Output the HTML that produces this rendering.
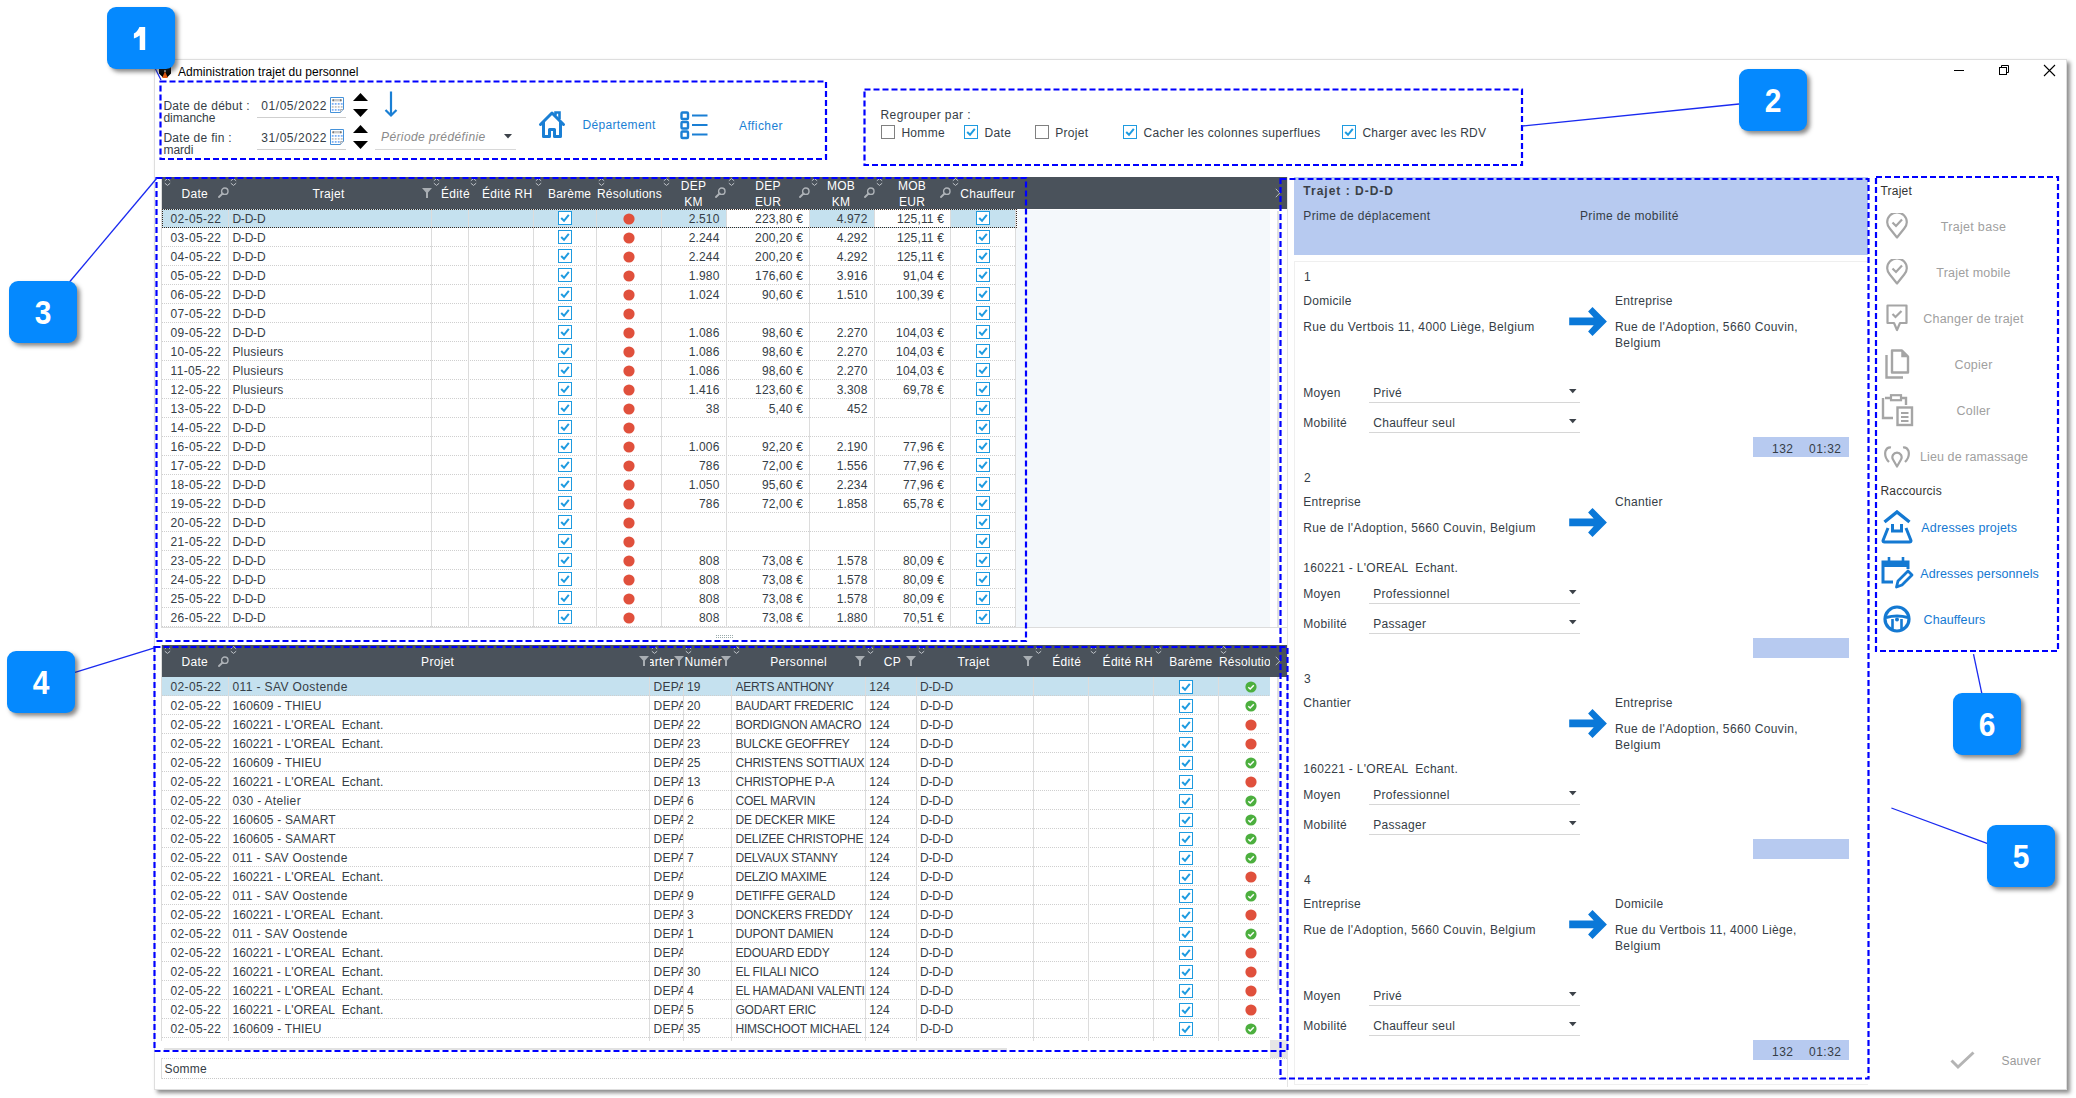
<!DOCTYPE html><html><head><meta charset="utf-8"><style>
html,body{margin:0;padding:0;background:#fff;width:2076px;height:1098px;overflow:hidden;position:relative;font-family:"Liberation Sans", sans-serif;}
.a{position:absolute;}
.t{position:absolute;white-space:pre;font-family:"Liberation Sans", sans-serif;letter-spacing:0.3px;}
.w{color:#fff;}
</style></head><body>
<div class="a" style="left:154px;top:59px;width:1911px;height:1029px;background:#fff;border:1px solid #dedede;box-shadow:3px 3px 4px rgba(0,0,0,0.45);"></div>
<svg class="a" style="left:159px;top:64px;" width="13" height="15" viewBox="0 0 13 15"><path d="M0 3 H3.5 L6 5 L8.5 3 H12 V9.5 L8.5 13 H3.5 L0 9.5 Z" fill="#000"/><path d="M6 7 L8.8 14 H3.2 Z" fill="#e35a12"/><rect x="5.3" y="6" width="1.4" height="2" fill="#ddd"/></svg>
<div class="t " style="left:178.0px;top:66.0px;font-size:12px;line-height:12px;color:#000;letter-spacing:0.05px;">Administration trajet du personnel</div>
<div class="a" style="left:1954px;top:70px;width:10px;height:1px;background:#000;"></div>
<svg class="a" style="left:1998px;top:64px;" width="13" height="13" viewBox="0 0 13 13"><rect x="1.5" y="3.5" width="7" height="7" fill="none" stroke="#000" stroke-width="1"/><path d="M3.5 3.5 V1.5 H10.5 V8.5 H8.5" fill="none" stroke="#000" stroke-width="1"/></svg>
<svg class="a" style="left:2043px;top:64px;" width="13" height="13" viewBox="0 0 13 13"><path d="M1 1 L12 12 M12 1 L1 12" stroke="#000" stroke-width="1.1"/></svg>
<div class="t " style="left:163.4px;top:100.0px;font-size:12px;line-height:12px;color:#353d46;">Date de début :</div>
<div class="t " style="left:163.4px;top:112.0px;font-size:12px;line-height:12px;color:#353d46;letter-spacing:0;">dimanche</div>
<div class="t " style="left:163.4px;top:132.0px;font-size:12px;line-height:12px;color:#353d46;">Date de fin :</div>
<div class="t " style="left:163.4px;top:144.0px;font-size:12px;line-height:12px;color:#353d46;letter-spacing:0;">mardi</div>
<div class="t " style="left:261.3px;top:100.0px;font-size:12px;line-height:12px;color:#353d46;letter-spacing:0.55px;">01/05/2022</div>
<div class="t " style="left:261.3px;top:132.0px;font-size:12px;line-height:12px;color:#353d46;letter-spacing:0.55px;">31/05/2022</div>
<div class="a" style="left:257px;top:117px;width:89px;height:1px;background:#cfcfcf;"></div>
<div class="a" style="left:257px;top:149px;width:89px;height:1px;background:#cfcfcf;"></div>
<svg class="a" style="left:330px;top:97px;" width="15" height="16" viewBox="0 0 15 16"><path d="M0.5 0.5 H13.5 V12.5 L10.5 15.5 H0.5 Z" fill="#fff" stroke="#4592da" stroke-width="1"/><rect x="2" y="2" width="10" height="2.4" fill="#c8c8c8"/><path d="M2 3.2 L4 2 V4.4 Z M12 3.2 L10 2 V4.4 Z" fill="#777"/><rect x="1.8" y="6.0" width="1.8" height="1.8" fill="#7fb0f2"/><rect x="1.8" y="9.0" width="1.8" height="1.8" fill="#c4c4c4"/><rect x="1.8" y="12.0" width="1.8" height="1.8" fill="#7fb0f2"/><rect x="4.8" y="6.0" width="1.8" height="1.8" fill="#7fb0f2"/><rect x="4.8" y="9.0" width="1.8" height="1.8" fill="#c4c4c4"/><rect x="4.8" y="12.0" width="1.8" height="1.8" fill="#7fb0f2"/><rect x="7.8" y="6.0" width="1.8" height="1.8" fill="#7fb0f2"/><rect x="7.8" y="9.0" width="1.8" height="1.8" fill="#c4c4c4"/><rect x="7.8" y="12.0" width="1.8" height="1.8" fill="#7fb0f2"/><rect x="10.8" y="6.0" width="1.8" height="1.8" fill="#7fb0f2"/><rect x="10.8" y="9.0" width="1.8" height="1.8" fill="#c4c4c4"/><rect x="10.8" y="12.0" width="1.8" height="1.8" fill="#7fb0f2"/><path d="M13.5 12.5 L10.5 12.5 L10.5 15.5" fill="#ddd" stroke="#999" stroke-width="0.6"/></svg>
<svg class="a" style="left:330px;top:129px;" width="15" height="16" viewBox="0 0 15 16"><path d="M0.5 0.5 H13.5 V12.5 L10.5 15.5 H0.5 Z" fill="#fff" stroke="#4592da" stroke-width="1"/><rect x="2" y="2" width="10" height="2.4" fill="#c8c8c8"/><path d="M2 3.2 L4 2 V4.4 Z M12 3.2 L10 2 V4.4 Z" fill="#777"/><rect x="1.8" y="6.0" width="1.8" height="1.8" fill="#7fb0f2"/><rect x="1.8" y="9.0" width="1.8" height="1.8" fill="#c4c4c4"/><rect x="1.8" y="12.0" width="1.8" height="1.8" fill="#7fb0f2"/><rect x="4.8" y="6.0" width="1.8" height="1.8" fill="#7fb0f2"/><rect x="4.8" y="9.0" width="1.8" height="1.8" fill="#c4c4c4"/><rect x="4.8" y="12.0" width="1.8" height="1.8" fill="#7fb0f2"/><rect x="7.8" y="6.0" width="1.8" height="1.8" fill="#7fb0f2"/><rect x="7.8" y="9.0" width="1.8" height="1.8" fill="#c4c4c4"/><rect x="7.8" y="12.0" width="1.8" height="1.8" fill="#7fb0f2"/><rect x="10.8" y="6.0" width="1.8" height="1.8" fill="#7fb0f2"/><rect x="10.8" y="9.0" width="1.8" height="1.8" fill="#c4c4c4"/><rect x="10.8" y="12.0" width="1.8" height="1.8" fill="#7fb0f2"/><path d="M13.5 12.5 L10.5 12.5 L10.5 15.5" fill="#ddd" stroke="#999" stroke-width="0.6"/></svg>
<svg class="a" style="left:353px;top:93px;" width="15" height="24" viewBox="0 0 15 24"><path d="M0 8 L7.5 0 L15 8 Z M0 16 L15 16 L7.5 24 Z" fill="#000"/></svg>
<svg class="a" style="left:353px;top:125px;" width="15" height="24" viewBox="0 0 15 24"><path d="M0 8 L7.5 0 L15 8 Z M0 16 L15 16 L7.5 24 Z" fill="#000"/></svg>
<svg class="a" style="left:384px;top:91px;" width="14" height="27" viewBox="0 0 14 27"><path d="M7 0.5 V24.5 M1.5 19 L7 24.5 L12.5 19" fill="none" stroke="#1a7fd4" stroke-width="2.2"/></svg>
<div class="t " style="left:381.0px;top:131.0px;font-size:12px;line-height:12px;color:#8a8a8a;font-style:italic;letter-spacing:0.4px;">Période prédéfinie</div>
<svg class="a" style="left:504px;top:134px;" width="9" height="5" viewBox="0 0 9 5"><path d="M0 0 H8 L4 4.5 Z" fill="#3c4249"/></svg>
<div class="a" style="left:375px;top:149px;width:141px;height:1px;background:#d8d8d8;"></div>
<svg class="a" style="left:538px;top:110px;" width="28" height="29" viewBox="0 0 28 29"><path d="M2.5 14.5 L14 3 L25.5 14.5" fill="none" stroke="#1a7fd4" stroke-width="3" stroke-linejoin="round" stroke-linecap="round"/><path d="M5.5 12 V26.5 H11.5 V19.5 H16.5 V26.5 H22.5 V12" fill="none" stroke="#1a7fd4" stroke-width="3" stroke-linejoin="round"/><path d="M17.5 5.5 V2.5 H21.5 V9" fill="none" stroke="#1a7fd4" stroke-width="2.6"/></svg>
<div class="t " style="left:582.4px;top:119.0px;font-size:12px;line-height:12px;color:#1a7fd4;letter-spacing:0.35px;">Département</div>
<svg class="a" style="left:680px;top:111px;" width="29" height="29" viewBox="0 0 29 29"><rect x="1.5" y="1.5" width="6.5" height="6.5" rx="1" fill="none" stroke="#1a7fd4" stroke-width="2.4"/><rect x="1.5" y="11" width="6.5" height="6.5" rx="1" fill="none" stroke="#1a7fd4" stroke-width="2.4"/><rect x="1.5" y="20.5" width="6.5" height="6.5" rx="1" fill="none" stroke="#1a7fd4" stroke-width="2.4"/><path d="M12 4.5 H27.5 M12 14 H27.5 M12 23.5 H27.5" stroke="#1a7fd4" stroke-width="2.2"/></svg>
<div class="t " style="left:739.0px;top:120.0px;font-size:12px;line-height:12px;color:#1a7fd4;letter-spacing:0.45px;">Afficher</div>
<div class="t " style="left:880.5px;top:109.0px;font-size:12px;line-height:12px;color:#353d46;letter-spacing:0.43px;">Regrouper par :</div>
<svg class="a" style="left:881px;top:125px;" width="14" height="14" viewBox="0 0 14 14"><rect x="0.5" y="0.5" width="13" height="13" fill="#fff" stroke="#808080" stroke-width="1"/></svg>
<div class="t " style="left:901.4px;top:127.0px;font-size:12px;line-height:12px;color:#353d46;">Homme</div>
<svg class="a" style="left:964px;top:125px;" width="14" height="14" viewBox="0 0 14 14"><rect x="0.5" y="0.5" width="13" height="13" fill="#fff" stroke="#1e9be0" stroke-width="1"/><path d="M3.2 7 L6 9.8 L10.8 3.8" fill="none" stroke="#1e9be0" stroke-width="2"/></svg>
<div class="t " style="left:984.6px;top:127.0px;font-size:12px;line-height:12px;color:#353d46;">Date</div>
<svg class="a" style="left:1035px;top:125px;" width="14" height="14" viewBox="0 0 14 14"><rect x="0.5" y="0.5" width="13" height="13" fill="#fff" stroke="#808080" stroke-width="1"/></svg>
<div class="t " style="left:1055.2px;top:127.0px;font-size:12px;line-height:12px;color:#353d46;">Projet</div>
<svg class="a" style="left:1123px;top:125px;" width="14" height="14" viewBox="0 0 14 14"><rect x="0.5" y="0.5" width="13" height="13" fill="#fff" stroke="#1e9be0" stroke-width="1"/><path d="M3.2 7 L6 9.8 L10.8 3.8" fill="none" stroke="#1e9be0" stroke-width="2"/></svg>
<div class="t " style="left:1143.5px;top:127.0px;font-size:12px;line-height:12px;color:#353d46;letter-spacing:0.32px;">Cacher les colonnes superflues</div>
<svg class="a" style="left:1342px;top:125px;" width="14" height="14" viewBox="0 0 14 14"><rect x="0.5" y="0.5" width="13" height="13" fill="#fff" stroke="#1e9be0" stroke-width="1"/><path d="M3.2 7 L6 9.8 L10.8 3.8" fill="none" stroke="#1e9be0" stroke-width="2"/></svg>
<div class="t " style="left:1362.4px;top:127.0px;font-size:12px;line-height:12px;color:#353d46;letter-spacing:0.22px;">Charger avec les RDV</div>
<div class="a" style="left:161px;top:177px;width:1px;height:451px;background:#dcdcdc;"></div>
<div class="a" style="left:1287px;top:177px;width:1px;height:451px;background:#dcdcdc;"></div>
<div class="a" style="left:161px;top:627px;width:1127px;height:1px;background:#dcdcdc;"></div>
<div class="a" style="left:1016px;top:210px;width:254px;height:417px;background:#f4f8fb;"></div>
<div class="a" style="left:1277px;top:211px;width:2px;height:416px;background:#e2e2e2;"></div>
<div class="a" style="left:162px;top:209px;width:853.6px;height:19px;background:#c5e1ef;"></div>
<div class="a" style="left:727px;top:209px;width:82.70000000000005px;height:18px;background:#fff;"></div>
<div class="a" style="left:875px;top:209px;width:75.29999999999995px;height:18px;background:#fff;"></div>
<div class="a" style="left:162px;top:227px;width:853.6px;height:1px;background-image:linear-gradient(90deg,#cfcfcf 50%,transparent 50%);background-size:2px 1px;"></div>
<div class="a" style="left:162px;top:246px;width:853.6px;height:1px;background-image:linear-gradient(90deg,#cfcfcf 50%,transparent 50%);background-size:2px 1px;"></div>
<div class="a" style="left:162px;top:265px;width:853.6px;height:1px;background-image:linear-gradient(90deg,#cfcfcf 50%,transparent 50%);background-size:2px 1px;"></div>
<div class="a" style="left:162px;top:284px;width:853.6px;height:1px;background-image:linear-gradient(90deg,#cfcfcf 50%,transparent 50%);background-size:2px 1px;"></div>
<div class="a" style="left:162px;top:303px;width:853.6px;height:1px;background-image:linear-gradient(90deg,#cfcfcf 50%,transparent 50%);background-size:2px 1px;"></div>
<div class="a" style="left:162px;top:322px;width:853.6px;height:1px;background-image:linear-gradient(90deg,#cfcfcf 50%,transparent 50%);background-size:2px 1px;"></div>
<div class="a" style="left:162px;top:341px;width:853.6px;height:1px;background-image:linear-gradient(90deg,#cfcfcf 50%,transparent 50%);background-size:2px 1px;"></div>
<div class="a" style="left:162px;top:360px;width:853.6px;height:1px;background-image:linear-gradient(90deg,#cfcfcf 50%,transparent 50%);background-size:2px 1px;"></div>
<div class="a" style="left:162px;top:379px;width:853.6px;height:1px;background-image:linear-gradient(90deg,#cfcfcf 50%,transparent 50%);background-size:2px 1px;"></div>
<div class="a" style="left:162px;top:398px;width:853.6px;height:1px;background-image:linear-gradient(90deg,#cfcfcf 50%,transparent 50%);background-size:2px 1px;"></div>
<div class="a" style="left:162px;top:417px;width:853.6px;height:1px;background-image:linear-gradient(90deg,#cfcfcf 50%,transparent 50%);background-size:2px 1px;"></div>
<div class="a" style="left:162px;top:436px;width:853.6px;height:1px;background-image:linear-gradient(90deg,#cfcfcf 50%,transparent 50%);background-size:2px 1px;"></div>
<div class="a" style="left:162px;top:455px;width:853.6px;height:1px;background-image:linear-gradient(90deg,#cfcfcf 50%,transparent 50%);background-size:2px 1px;"></div>
<div class="a" style="left:162px;top:474px;width:853.6px;height:1px;background-image:linear-gradient(90deg,#cfcfcf 50%,transparent 50%);background-size:2px 1px;"></div>
<div class="a" style="left:162px;top:493px;width:853.6px;height:1px;background-image:linear-gradient(90deg,#cfcfcf 50%,transparent 50%);background-size:2px 1px;"></div>
<div class="a" style="left:162px;top:512px;width:853.6px;height:1px;background-image:linear-gradient(90deg,#cfcfcf 50%,transparent 50%);background-size:2px 1px;"></div>
<div class="a" style="left:162px;top:531px;width:853.6px;height:1px;background-image:linear-gradient(90deg,#cfcfcf 50%,transparent 50%);background-size:2px 1px;"></div>
<div class="a" style="left:162px;top:550px;width:853.6px;height:1px;background-image:linear-gradient(90deg,#cfcfcf 50%,transparent 50%);background-size:2px 1px;"></div>
<div class="a" style="left:162px;top:569px;width:853.6px;height:1px;background-image:linear-gradient(90deg,#cfcfcf 50%,transparent 50%);background-size:2px 1px;"></div>
<div class="a" style="left:162px;top:588px;width:853.6px;height:1px;background-image:linear-gradient(90deg,#cfcfcf 50%,transparent 50%);background-size:2px 1px;"></div>
<div class="a" style="left:162px;top:607px;width:853.6px;height:1px;background-image:linear-gradient(90deg,#cfcfcf 50%,transparent 50%);background-size:2px 1px;"></div>
<div class="a" style="left:162px;top:626px;width:853.6px;height:1px;background-image:linear-gradient(90deg,#cfcfcf 50%,transparent 50%);background-size:2px 1px;"></div>
<div class="a" style="left:228px;top:209px;width:1px;height:418px;background:#dcdcdc;"></div>
<div class="a" style="left:431px;top:209px;width:1px;height:418px;background:#dcdcdc;"></div>
<div class="a" style="left:468px;top:209px;width:1px;height:418px;background:#dcdcdc;"></div>
<div class="a" style="left:533px;top:209px;width:1px;height:418px;background:#dcdcdc;"></div>
<div class="a" style="left:596px;top:209px;width:1px;height:418px;background:#dcdcdc;"></div>
<div class="a" style="left:661px;top:209px;width:1px;height:418px;background:#dcdcdc;"></div>
<div class="a" style="left:726px;top:209px;width:1px;height:418px;background:#dcdcdc;"></div>
<div class="a" style="left:809px;top:209px;width:1px;height:418px;background:#dcdcdc;"></div>
<div class="a" style="left:874px;top:209px;width:1px;height:418px;background:#dcdcdc;"></div>
<div class="a" style="left:950px;top:209px;width:1px;height:418px;background:#dcdcdc;"></div>
<div class="a" style="left:1015px;top:209px;width:1px;height:418px;background:#dcdcdc;"></div>
<div class="a" style="left:162px;top:209px;width:852.6px;height:17px;border:1px dotted #3a2a20;box-sizing:content-box;"></div>
<div class="a" style="left:162px;top:177px;width:1125px;height:32px;background:#4a525b;"></div>
<svg class="a" style="left:163.5px;top:178px;" width="7" height="8" viewBox="0 0 7 8"><path d="M0.8 2.8 L3.5 0.6 L6.2 2.8 M0.8 5.2 L3.5 7.4 L6.2 5.2" fill="none" stroke="#c9cdd2" stroke-width="0.9"/></svg>
<svg class="a" style="left:230.0px;top:178px;" width="7" height="8" viewBox="0 0 7 8"><path d="M0.8 2.8 L3.5 0.6 L6.2 2.8 M0.8 5.2 L3.5 7.4 L6.2 5.2" fill="none" stroke="#c9cdd2" stroke-width="0.9"/></svg>
<svg class="a" style="left:432.9px;top:178px;" width="7" height="8" viewBox="0 0 7 8"><path d="M0.8 2.8 L3.5 0.6 L6.2 2.8 M0.8 5.2 L3.5 7.4 L6.2 5.2" fill="none" stroke="#c9cdd2" stroke-width="0.9"/></svg>
<svg class="a" style="left:470.1px;top:178px;" width="7" height="8" viewBox="0 0 7 8"><path d="M0.8 2.8 L3.5 0.6 L6.2 2.8 M0.8 5.2 L3.5 7.4 L6.2 5.2" fill="none" stroke="#c9cdd2" stroke-width="0.9"/></svg>
<svg class="a" style="left:535.1px;top:178px;" width="7" height="8" viewBox="0 0 7 8"><path d="M0.8 2.8 L3.5 0.6 L6.2 2.8 M0.8 5.2 L3.5 7.4 L6.2 5.2" fill="none" stroke="#c9cdd2" stroke-width="0.9"/></svg>
<svg class="a" style="left:597.8px;top:178px;" width="7" height="8" viewBox="0 0 7 8"><path d="M0.8 2.8 L3.5 0.6 L6.2 2.8 M0.8 5.2 L3.5 7.4 L6.2 5.2" fill="none" stroke="#c9cdd2" stroke-width="0.9"/></svg>
<svg class="a" style="left:662.8px;top:178px;" width="7" height="8" viewBox="0 0 7 8"><path d="M0.8 2.8 L3.5 0.6 L6.2 2.8 M0.8 5.2 L3.5 7.4 L6.2 5.2" fill="none" stroke="#c9cdd2" stroke-width="0.9"/></svg>
<svg class="a" style="left:727.9px;top:178px;" width="7" height="8" viewBox="0 0 7 8"><path d="M0.8 2.8 L3.5 0.6 L6.2 2.8 M0.8 5.2 L3.5 7.4 L6.2 5.2" fill="none" stroke="#c9cdd2" stroke-width="0.9"/></svg>
<svg class="a" style="left:811.2px;top:178px;" width="7" height="8" viewBox="0 0 7 8"><path d="M0.8 2.8 L3.5 0.6 L6.2 2.8 M0.8 5.2 L3.5 7.4 L6.2 5.2" fill="none" stroke="#c9cdd2" stroke-width="0.9"/></svg>
<svg class="a" style="left:875.8px;top:178px;" width="7" height="8" viewBox="0 0 7 8"><path d="M0.8 2.8 L3.5 0.6 L6.2 2.8 M0.8 5.2 L3.5 7.4 L6.2 5.2" fill="none" stroke="#c9cdd2" stroke-width="0.9"/></svg>
<svg class="a" style="left:951.8px;top:178px;" width="7" height="8" viewBox="0 0 7 8"><path d="M0.8 2.8 L3.5 0.6 L6.2 2.8 M0.8 5.2 L3.5 7.4 L6.2 5.2" fill="none" stroke="#c9cdd2" stroke-width="0.9"/></svg>
<div class="t " style="left:181.5px;top:188.0px;font-size:12px;line-height:12px;color:#fff;">Date</div>
<svg class="a" style="left:218px;top:187px;" width="11" height="11" viewBox="0 0 11 11"><circle cx="6.8" cy="4.2" r="3.2" fill="none" stroke="#aeb3b8" stroke-width="1.4"/><path d="M4.6 6.5 L1 10" stroke="#aeb3b8" stroke-width="1.8" stroke-linecap="round"/></svg>
<div class="t " style="left:312.5px;top:188.0px;font-size:12px;line-height:12px;color:#fff;">Trajet</div>
<svg class="a" style="left:422px;top:188px;" width="10" height="10" viewBox="0 0 10 10"><path d="M0 0 H10 L6 4.5 V10 H4 V4.5 Z" fill="#a9aeb3"/></svg>
<div class="t " style="left:441.0px;top:188.0px;font-size:12px;line-height:12px;color:#fff;">Édité</div>
<div class="t " style="left:482.0px;top:188.0px;font-size:12px;line-height:12px;color:#fff;">Édité RH</div>
<div class="t " style="left:548.0px;top:188.0px;font-size:12px;line-height:12px;color:#fff;letter-spacing:0.2px;">Barème</div>
<div class="t " style="left:597.0px;top:188.0px;font-size:12px;line-height:12px;color:#fff;letter-spacing:0.2px;">Résolutions</div>
<div class="t " style="left:493.5px;width:400px;text-align:center;top:180.0px;font-size:12px;line-height:12px;color:#fff;">DEP</div>
<div class="t " style="left:493.5px;width:400px;text-align:center;top:196.0px;font-size:12px;line-height:12px;color:#fff;">KM</div>
<svg class="a" style="left:715.4px;top:187px;" width="11" height="11" viewBox="0 0 11 11"><circle cx="6.8" cy="4.2" r="3.2" fill="none" stroke="#aeb3b8" stroke-width="1.4"/><path d="M4.6 6.5 L1 10" stroke="#aeb3b8" stroke-width="1.8" stroke-linecap="round"/></svg>
<div class="t " style="left:568.0px;width:400px;text-align:center;top:180.0px;font-size:12px;line-height:12px;color:#fff;">DEP</div>
<div class="t " style="left:568.0px;width:400px;text-align:center;top:196.0px;font-size:12px;line-height:12px;color:#fff;">EUR</div>
<svg class="a" style="left:798.7px;top:187px;" width="11" height="11" viewBox="0 0 11 11"><circle cx="6.8" cy="4.2" r="3.2" fill="none" stroke="#aeb3b8" stroke-width="1.4"/><path d="M4.6 6.5 L1 10" stroke="#aeb3b8" stroke-width="1.8" stroke-linecap="round"/></svg>
<div class="t " style="left:641.0px;width:400px;text-align:center;top:180.0px;font-size:12px;line-height:12px;color:#fff;">MOB</div>
<div class="t " style="left:641.0px;width:400px;text-align:center;top:196.0px;font-size:12px;line-height:12px;color:#fff;">KM</div>
<svg class="a" style="left:863.7px;top:187px;" width="11" height="11" viewBox="0 0 11 11"><circle cx="6.8" cy="4.2" r="3.2" fill="none" stroke="#aeb3b8" stroke-width="1.4"/><path d="M4.6 6.5 L1 10" stroke="#aeb3b8" stroke-width="1.8" stroke-linecap="round"/></svg>
<div class="t " style="left:712.0px;width:400px;text-align:center;top:180.0px;font-size:12px;line-height:12px;color:#fff;">MOB</div>
<div class="t " style="left:712.0px;width:400px;text-align:center;top:196.0px;font-size:12px;line-height:12px;color:#fff;">EUR</div>
<svg class="a" style="left:939.6px;top:187px;" width="11" height="11" viewBox="0 0 11 11"><circle cx="6.8" cy="4.2" r="3.2" fill="none" stroke="#aeb3b8" stroke-width="1.4"/><path d="M4.6 6.5 L1 10" stroke="#aeb3b8" stroke-width="1.8" stroke-linecap="round"/></svg>
<div class="t " style="left:960.3px;top:188.0px;font-size:12px;line-height:12px;color:#fff;letter-spacing:0.25px;">Chauffeur</div>
<svg class="a" style="left:1275px;top:188px;" width="6" height="10" viewBox="0 0 6 10"><path d="M0.8 0.8 L4.8 5 L0.8 9.2" fill="none" stroke="#b8bcc0" stroke-width="1"/></svg>
<div class="t " style="left:170.5px;top:213.0px;font-size:12px;line-height:12px;color:#353d46;letter-spacing:0.35px;">02-05-22</div>
<div class="t " style="left:232.4px;top:213.0px;font-size:12px;line-height:12px;color:#353d46;letter-spacing:-0.2px;">D-D-D</div>
<svg class="a" style="left:558px;top:211px;" width="14" height="14" viewBox="0 0 14 14"><rect x="0.5" y="0.5" width="13" height="13" fill="#fff" stroke="#1e9be0" stroke-width="1"/><path d="M3.2 7 L6 9.8 L10.8 3.8" fill="none" stroke="#1e9be0" stroke-width="2"/></svg>
<svg class="a" style="left:622.5px;top:212.5px;" width="12" height="12" viewBox="0 0 12 12"><circle cx="6" cy="6" r="5.6" fill="#e0503c"/></svg>
<div class="t " style="right:1356.5px;top:213.0px;font-size:12px;line-height:12px;color:#353d46;letter-spacing:0.15px;">2.510</div>
<div class="t " style="right:1273.0px;top:213.0px;font-size:12px;line-height:12px;color:#353d46;letter-spacing:0.15px;">223,80 €</div>
<div class="t " style="right:1208.5px;top:213.0px;font-size:12px;line-height:12px;color:#353d46;letter-spacing:0.15px;">4.972</div>
<div class="t " style="right:1132.0px;top:213.0px;font-size:12px;line-height:12px;color:#353d46;letter-spacing:0.15px;">125,11 €</div>
<svg class="a" style="left:976px;top:211px;" width="14" height="14" viewBox="0 0 14 14"><rect x="0.5" y="0.5" width="13" height="13" fill="#fff" stroke="#1e9be0" stroke-width="1"/><path d="M3.2 7 L6 9.8 L10.8 3.8" fill="none" stroke="#1e9be0" stroke-width="2"/></svg>
<div class="t " style="left:170.5px;top:232.0px;font-size:12px;line-height:12px;color:#353d46;letter-spacing:0.35px;">03-05-22</div>
<div class="t " style="left:232.4px;top:232.0px;font-size:12px;line-height:12px;color:#353d46;letter-spacing:-0.2px;">D-D-D</div>
<svg class="a" style="left:558px;top:230px;" width="14" height="14" viewBox="0 0 14 14"><rect x="0.5" y="0.5" width="13" height="13" fill="#fff" stroke="#1e9be0" stroke-width="1"/><path d="M3.2 7 L6 9.8 L10.8 3.8" fill="none" stroke="#1e9be0" stroke-width="2"/></svg>
<svg class="a" style="left:622.5px;top:231.5px;" width="12" height="12" viewBox="0 0 12 12"><circle cx="6" cy="6" r="5.6" fill="#e0503c"/></svg>
<div class="t " style="right:1356.5px;top:232.0px;font-size:12px;line-height:12px;color:#353d46;letter-spacing:0.15px;">2.244</div>
<div class="t " style="right:1273.0px;top:232.0px;font-size:12px;line-height:12px;color:#353d46;letter-spacing:0.15px;">200,20 €</div>
<div class="t " style="right:1208.5px;top:232.0px;font-size:12px;line-height:12px;color:#353d46;letter-spacing:0.15px;">4.292</div>
<div class="t " style="right:1132.0px;top:232.0px;font-size:12px;line-height:12px;color:#353d46;letter-spacing:0.15px;">125,11 €</div>
<svg class="a" style="left:976px;top:230px;" width="14" height="14" viewBox="0 0 14 14"><rect x="0.5" y="0.5" width="13" height="13" fill="#fff" stroke="#1e9be0" stroke-width="1"/><path d="M3.2 7 L6 9.8 L10.8 3.8" fill="none" stroke="#1e9be0" stroke-width="2"/></svg>
<div class="t " style="left:170.5px;top:251.0px;font-size:12px;line-height:12px;color:#353d46;letter-spacing:0.35px;">04-05-22</div>
<div class="t " style="left:232.4px;top:251.0px;font-size:12px;line-height:12px;color:#353d46;letter-spacing:-0.2px;">D-D-D</div>
<svg class="a" style="left:558px;top:249px;" width="14" height="14" viewBox="0 0 14 14"><rect x="0.5" y="0.5" width="13" height="13" fill="#fff" stroke="#1e9be0" stroke-width="1"/><path d="M3.2 7 L6 9.8 L10.8 3.8" fill="none" stroke="#1e9be0" stroke-width="2"/></svg>
<svg class="a" style="left:622.5px;top:250.5px;" width="12" height="12" viewBox="0 0 12 12"><circle cx="6" cy="6" r="5.6" fill="#e0503c"/></svg>
<div class="t " style="right:1356.5px;top:251.0px;font-size:12px;line-height:12px;color:#353d46;letter-spacing:0.15px;">2.244</div>
<div class="t " style="right:1273.0px;top:251.0px;font-size:12px;line-height:12px;color:#353d46;letter-spacing:0.15px;">200,20 €</div>
<div class="t " style="right:1208.5px;top:251.0px;font-size:12px;line-height:12px;color:#353d46;letter-spacing:0.15px;">4.292</div>
<div class="t " style="right:1132.0px;top:251.0px;font-size:12px;line-height:12px;color:#353d46;letter-spacing:0.15px;">125,11 €</div>
<svg class="a" style="left:976px;top:249px;" width="14" height="14" viewBox="0 0 14 14"><rect x="0.5" y="0.5" width="13" height="13" fill="#fff" stroke="#1e9be0" stroke-width="1"/><path d="M3.2 7 L6 9.8 L10.8 3.8" fill="none" stroke="#1e9be0" stroke-width="2"/></svg>
<div class="t " style="left:170.5px;top:270.0px;font-size:12px;line-height:12px;color:#353d46;letter-spacing:0.35px;">05-05-22</div>
<div class="t " style="left:232.4px;top:270.0px;font-size:12px;line-height:12px;color:#353d46;letter-spacing:-0.2px;">D-D-D</div>
<svg class="a" style="left:558px;top:268px;" width="14" height="14" viewBox="0 0 14 14"><rect x="0.5" y="0.5" width="13" height="13" fill="#fff" stroke="#1e9be0" stroke-width="1"/><path d="M3.2 7 L6 9.8 L10.8 3.8" fill="none" stroke="#1e9be0" stroke-width="2"/></svg>
<svg class="a" style="left:622.5px;top:269.5px;" width="12" height="12" viewBox="0 0 12 12"><circle cx="6" cy="6" r="5.6" fill="#e0503c"/></svg>
<div class="t " style="right:1356.5px;top:270.0px;font-size:12px;line-height:12px;color:#353d46;letter-spacing:0.15px;">1.980</div>
<div class="t " style="right:1273.0px;top:270.0px;font-size:12px;line-height:12px;color:#353d46;letter-spacing:0.15px;">176,60 €</div>
<div class="t " style="right:1208.5px;top:270.0px;font-size:12px;line-height:12px;color:#353d46;letter-spacing:0.15px;">3.916</div>
<div class="t " style="right:1132.0px;top:270.0px;font-size:12px;line-height:12px;color:#353d46;letter-spacing:0.15px;">91,04 €</div>
<svg class="a" style="left:976px;top:268px;" width="14" height="14" viewBox="0 0 14 14"><rect x="0.5" y="0.5" width="13" height="13" fill="#fff" stroke="#1e9be0" stroke-width="1"/><path d="M3.2 7 L6 9.8 L10.8 3.8" fill="none" stroke="#1e9be0" stroke-width="2"/></svg>
<div class="t " style="left:170.5px;top:289.0px;font-size:12px;line-height:12px;color:#353d46;letter-spacing:0.35px;">06-05-22</div>
<div class="t " style="left:232.4px;top:289.0px;font-size:12px;line-height:12px;color:#353d46;letter-spacing:-0.2px;">D-D-D</div>
<svg class="a" style="left:558px;top:287px;" width="14" height="14" viewBox="0 0 14 14"><rect x="0.5" y="0.5" width="13" height="13" fill="#fff" stroke="#1e9be0" stroke-width="1"/><path d="M3.2 7 L6 9.8 L10.8 3.8" fill="none" stroke="#1e9be0" stroke-width="2"/></svg>
<svg class="a" style="left:622.5px;top:288.5px;" width="12" height="12" viewBox="0 0 12 12"><circle cx="6" cy="6" r="5.6" fill="#e0503c"/></svg>
<div class="t " style="right:1356.5px;top:289.0px;font-size:12px;line-height:12px;color:#353d46;letter-spacing:0.15px;">1.024</div>
<div class="t " style="right:1273.0px;top:289.0px;font-size:12px;line-height:12px;color:#353d46;letter-spacing:0.15px;">90,60 €</div>
<div class="t " style="right:1208.5px;top:289.0px;font-size:12px;line-height:12px;color:#353d46;letter-spacing:0.15px;">1.510</div>
<div class="t " style="right:1132.0px;top:289.0px;font-size:12px;line-height:12px;color:#353d46;letter-spacing:0.15px;">100,39 €</div>
<svg class="a" style="left:976px;top:287px;" width="14" height="14" viewBox="0 0 14 14"><rect x="0.5" y="0.5" width="13" height="13" fill="#fff" stroke="#1e9be0" stroke-width="1"/><path d="M3.2 7 L6 9.8 L10.8 3.8" fill="none" stroke="#1e9be0" stroke-width="2"/></svg>
<div class="t " style="left:170.5px;top:308.0px;font-size:12px;line-height:12px;color:#353d46;letter-spacing:0.35px;">07-05-22</div>
<div class="t " style="left:232.4px;top:308.0px;font-size:12px;line-height:12px;color:#353d46;letter-spacing:-0.2px;">D-D-D</div>
<svg class="a" style="left:558px;top:306px;" width="14" height="14" viewBox="0 0 14 14"><rect x="0.5" y="0.5" width="13" height="13" fill="#fff" stroke="#1e9be0" stroke-width="1"/><path d="M3.2 7 L6 9.8 L10.8 3.8" fill="none" stroke="#1e9be0" stroke-width="2"/></svg>
<svg class="a" style="left:622.5px;top:307.5px;" width="12" height="12" viewBox="0 0 12 12"><circle cx="6" cy="6" r="5.6" fill="#e0503c"/></svg>
<svg class="a" style="left:976px;top:306px;" width="14" height="14" viewBox="0 0 14 14"><rect x="0.5" y="0.5" width="13" height="13" fill="#fff" stroke="#1e9be0" stroke-width="1"/><path d="M3.2 7 L6 9.8 L10.8 3.8" fill="none" stroke="#1e9be0" stroke-width="2"/></svg>
<div class="t " style="left:170.5px;top:327.0px;font-size:12px;line-height:12px;color:#353d46;letter-spacing:0.35px;">09-05-22</div>
<div class="t " style="left:232.4px;top:327.0px;font-size:12px;line-height:12px;color:#353d46;letter-spacing:-0.2px;">D-D-D</div>
<svg class="a" style="left:558px;top:325px;" width="14" height="14" viewBox="0 0 14 14"><rect x="0.5" y="0.5" width="13" height="13" fill="#fff" stroke="#1e9be0" stroke-width="1"/><path d="M3.2 7 L6 9.8 L10.8 3.8" fill="none" stroke="#1e9be0" stroke-width="2"/></svg>
<svg class="a" style="left:622.5px;top:326.5px;" width="12" height="12" viewBox="0 0 12 12"><circle cx="6" cy="6" r="5.6" fill="#e0503c"/></svg>
<div class="t " style="right:1356.5px;top:327.0px;font-size:12px;line-height:12px;color:#353d46;letter-spacing:0.15px;">1.086</div>
<div class="t " style="right:1273.0px;top:327.0px;font-size:12px;line-height:12px;color:#353d46;letter-spacing:0.15px;">98,60 €</div>
<div class="t " style="right:1208.5px;top:327.0px;font-size:12px;line-height:12px;color:#353d46;letter-spacing:0.15px;">2.270</div>
<div class="t " style="right:1132.0px;top:327.0px;font-size:12px;line-height:12px;color:#353d46;letter-spacing:0.15px;">104,03 €</div>
<svg class="a" style="left:976px;top:325px;" width="14" height="14" viewBox="0 0 14 14"><rect x="0.5" y="0.5" width="13" height="13" fill="#fff" stroke="#1e9be0" stroke-width="1"/><path d="M3.2 7 L6 9.8 L10.8 3.8" fill="none" stroke="#1e9be0" stroke-width="2"/></svg>
<div class="t " style="left:170.5px;top:346.0px;font-size:12px;line-height:12px;color:#353d46;letter-spacing:0.35px;">10-05-22</div>
<div class="t " style="left:232.4px;top:346.0px;font-size:12px;line-height:12px;color:#353d46;letter-spacing:0.2px;">Plusieurs</div>
<svg class="a" style="left:558px;top:344px;" width="14" height="14" viewBox="0 0 14 14"><rect x="0.5" y="0.5" width="13" height="13" fill="#fff" stroke="#1e9be0" stroke-width="1"/><path d="M3.2 7 L6 9.8 L10.8 3.8" fill="none" stroke="#1e9be0" stroke-width="2"/></svg>
<svg class="a" style="left:622.5px;top:345.5px;" width="12" height="12" viewBox="0 0 12 12"><circle cx="6" cy="6" r="5.6" fill="#e0503c"/></svg>
<div class="t " style="right:1356.5px;top:346.0px;font-size:12px;line-height:12px;color:#353d46;letter-spacing:0.15px;">1.086</div>
<div class="t " style="right:1273.0px;top:346.0px;font-size:12px;line-height:12px;color:#353d46;letter-spacing:0.15px;">98,60 €</div>
<div class="t " style="right:1208.5px;top:346.0px;font-size:12px;line-height:12px;color:#353d46;letter-spacing:0.15px;">2.270</div>
<div class="t " style="right:1132.0px;top:346.0px;font-size:12px;line-height:12px;color:#353d46;letter-spacing:0.15px;">104,03 €</div>
<svg class="a" style="left:976px;top:344px;" width="14" height="14" viewBox="0 0 14 14"><rect x="0.5" y="0.5" width="13" height="13" fill="#fff" stroke="#1e9be0" stroke-width="1"/><path d="M3.2 7 L6 9.8 L10.8 3.8" fill="none" stroke="#1e9be0" stroke-width="2"/></svg>
<div class="t " style="left:170.5px;top:365.0px;font-size:12px;line-height:12px;color:#353d46;letter-spacing:0.35px;">11-05-22</div>
<div class="t " style="left:232.4px;top:365.0px;font-size:12px;line-height:12px;color:#353d46;letter-spacing:0.2px;">Plusieurs</div>
<svg class="a" style="left:558px;top:363px;" width="14" height="14" viewBox="0 0 14 14"><rect x="0.5" y="0.5" width="13" height="13" fill="#fff" stroke="#1e9be0" stroke-width="1"/><path d="M3.2 7 L6 9.8 L10.8 3.8" fill="none" stroke="#1e9be0" stroke-width="2"/></svg>
<svg class="a" style="left:622.5px;top:364.5px;" width="12" height="12" viewBox="0 0 12 12"><circle cx="6" cy="6" r="5.6" fill="#e0503c"/></svg>
<div class="t " style="right:1356.5px;top:365.0px;font-size:12px;line-height:12px;color:#353d46;letter-spacing:0.15px;">1.086</div>
<div class="t " style="right:1273.0px;top:365.0px;font-size:12px;line-height:12px;color:#353d46;letter-spacing:0.15px;">98,60 €</div>
<div class="t " style="right:1208.5px;top:365.0px;font-size:12px;line-height:12px;color:#353d46;letter-spacing:0.15px;">2.270</div>
<div class="t " style="right:1132.0px;top:365.0px;font-size:12px;line-height:12px;color:#353d46;letter-spacing:0.15px;">104,03 €</div>
<svg class="a" style="left:976px;top:363px;" width="14" height="14" viewBox="0 0 14 14"><rect x="0.5" y="0.5" width="13" height="13" fill="#fff" stroke="#1e9be0" stroke-width="1"/><path d="M3.2 7 L6 9.8 L10.8 3.8" fill="none" stroke="#1e9be0" stroke-width="2"/></svg>
<div class="t " style="left:170.5px;top:384.0px;font-size:12px;line-height:12px;color:#353d46;letter-spacing:0.35px;">12-05-22</div>
<div class="t " style="left:232.4px;top:384.0px;font-size:12px;line-height:12px;color:#353d46;letter-spacing:0.2px;">Plusieurs</div>
<svg class="a" style="left:558px;top:382px;" width="14" height="14" viewBox="0 0 14 14"><rect x="0.5" y="0.5" width="13" height="13" fill="#fff" stroke="#1e9be0" stroke-width="1"/><path d="M3.2 7 L6 9.8 L10.8 3.8" fill="none" stroke="#1e9be0" stroke-width="2"/></svg>
<svg class="a" style="left:622.5px;top:383.5px;" width="12" height="12" viewBox="0 0 12 12"><circle cx="6" cy="6" r="5.6" fill="#e0503c"/></svg>
<div class="t " style="right:1356.5px;top:384.0px;font-size:12px;line-height:12px;color:#353d46;letter-spacing:0.15px;">1.416</div>
<div class="t " style="right:1273.0px;top:384.0px;font-size:12px;line-height:12px;color:#353d46;letter-spacing:0.15px;">123,60 €</div>
<div class="t " style="right:1208.5px;top:384.0px;font-size:12px;line-height:12px;color:#353d46;letter-spacing:0.15px;">3.308</div>
<div class="t " style="right:1132.0px;top:384.0px;font-size:12px;line-height:12px;color:#353d46;letter-spacing:0.15px;">69,78 €</div>
<svg class="a" style="left:976px;top:382px;" width="14" height="14" viewBox="0 0 14 14"><rect x="0.5" y="0.5" width="13" height="13" fill="#fff" stroke="#1e9be0" stroke-width="1"/><path d="M3.2 7 L6 9.8 L10.8 3.8" fill="none" stroke="#1e9be0" stroke-width="2"/></svg>
<div class="t " style="left:170.5px;top:403.0px;font-size:12px;line-height:12px;color:#353d46;letter-spacing:0.35px;">13-05-22</div>
<div class="t " style="left:232.4px;top:403.0px;font-size:12px;line-height:12px;color:#353d46;letter-spacing:-0.2px;">D-D-D</div>
<svg class="a" style="left:558px;top:401px;" width="14" height="14" viewBox="0 0 14 14"><rect x="0.5" y="0.5" width="13" height="13" fill="#fff" stroke="#1e9be0" stroke-width="1"/><path d="M3.2 7 L6 9.8 L10.8 3.8" fill="none" stroke="#1e9be0" stroke-width="2"/></svg>
<svg class="a" style="left:622.5px;top:402.5px;" width="12" height="12" viewBox="0 0 12 12"><circle cx="6" cy="6" r="5.6" fill="#e0503c"/></svg>
<div class="t " style="right:1356.5px;top:403.0px;font-size:12px;line-height:12px;color:#353d46;letter-spacing:0.15px;">38</div>
<div class="t " style="right:1273.0px;top:403.0px;font-size:12px;line-height:12px;color:#353d46;letter-spacing:0.15px;">5,40 €</div>
<div class="t " style="right:1208.5px;top:403.0px;font-size:12px;line-height:12px;color:#353d46;letter-spacing:0.15px;">452</div>
<svg class="a" style="left:976px;top:401px;" width="14" height="14" viewBox="0 0 14 14"><rect x="0.5" y="0.5" width="13" height="13" fill="#fff" stroke="#1e9be0" stroke-width="1"/><path d="M3.2 7 L6 9.8 L10.8 3.8" fill="none" stroke="#1e9be0" stroke-width="2"/></svg>
<div class="t " style="left:170.5px;top:422.0px;font-size:12px;line-height:12px;color:#353d46;letter-spacing:0.35px;">14-05-22</div>
<div class="t " style="left:232.4px;top:422.0px;font-size:12px;line-height:12px;color:#353d46;letter-spacing:-0.2px;">D-D-D</div>
<svg class="a" style="left:558px;top:420px;" width="14" height="14" viewBox="0 0 14 14"><rect x="0.5" y="0.5" width="13" height="13" fill="#fff" stroke="#1e9be0" stroke-width="1"/><path d="M3.2 7 L6 9.8 L10.8 3.8" fill="none" stroke="#1e9be0" stroke-width="2"/></svg>
<svg class="a" style="left:622.5px;top:421.5px;" width="12" height="12" viewBox="0 0 12 12"><circle cx="6" cy="6" r="5.6" fill="#e0503c"/></svg>
<svg class="a" style="left:976px;top:420px;" width="14" height="14" viewBox="0 0 14 14"><rect x="0.5" y="0.5" width="13" height="13" fill="#fff" stroke="#1e9be0" stroke-width="1"/><path d="M3.2 7 L6 9.8 L10.8 3.8" fill="none" stroke="#1e9be0" stroke-width="2"/></svg>
<div class="t " style="left:170.5px;top:441.0px;font-size:12px;line-height:12px;color:#353d46;letter-spacing:0.35px;">16-05-22</div>
<div class="t " style="left:232.4px;top:441.0px;font-size:12px;line-height:12px;color:#353d46;letter-spacing:-0.2px;">D-D-D</div>
<svg class="a" style="left:558px;top:439px;" width="14" height="14" viewBox="0 0 14 14"><rect x="0.5" y="0.5" width="13" height="13" fill="#fff" stroke="#1e9be0" stroke-width="1"/><path d="M3.2 7 L6 9.8 L10.8 3.8" fill="none" stroke="#1e9be0" stroke-width="2"/></svg>
<svg class="a" style="left:622.5px;top:440.5px;" width="12" height="12" viewBox="0 0 12 12"><circle cx="6" cy="6" r="5.6" fill="#e0503c"/></svg>
<div class="t " style="right:1356.5px;top:441.0px;font-size:12px;line-height:12px;color:#353d46;letter-spacing:0.15px;">1.006</div>
<div class="t " style="right:1273.0px;top:441.0px;font-size:12px;line-height:12px;color:#353d46;letter-spacing:0.15px;">92,20 €</div>
<div class="t " style="right:1208.5px;top:441.0px;font-size:12px;line-height:12px;color:#353d46;letter-spacing:0.15px;">2.190</div>
<div class="t " style="right:1132.0px;top:441.0px;font-size:12px;line-height:12px;color:#353d46;letter-spacing:0.15px;">77,96 €</div>
<svg class="a" style="left:976px;top:439px;" width="14" height="14" viewBox="0 0 14 14"><rect x="0.5" y="0.5" width="13" height="13" fill="#fff" stroke="#1e9be0" stroke-width="1"/><path d="M3.2 7 L6 9.8 L10.8 3.8" fill="none" stroke="#1e9be0" stroke-width="2"/></svg>
<div class="t " style="left:170.5px;top:460.0px;font-size:12px;line-height:12px;color:#353d46;letter-spacing:0.35px;">17-05-22</div>
<div class="t " style="left:232.4px;top:460.0px;font-size:12px;line-height:12px;color:#353d46;letter-spacing:-0.2px;">D-D-D</div>
<svg class="a" style="left:558px;top:458px;" width="14" height="14" viewBox="0 0 14 14"><rect x="0.5" y="0.5" width="13" height="13" fill="#fff" stroke="#1e9be0" stroke-width="1"/><path d="M3.2 7 L6 9.8 L10.8 3.8" fill="none" stroke="#1e9be0" stroke-width="2"/></svg>
<svg class="a" style="left:622.5px;top:459.5px;" width="12" height="12" viewBox="0 0 12 12"><circle cx="6" cy="6" r="5.6" fill="#e0503c"/></svg>
<div class="t " style="right:1356.5px;top:460.0px;font-size:12px;line-height:12px;color:#353d46;letter-spacing:0.15px;">786</div>
<div class="t " style="right:1273.0px;top:460.0px;font-size:12px;line-height:12px;color:#353d46;letter-spacing:0.15px;">72,00 €</div>
<div class="t " style="right:1208.5px;top:460.0px;font-size:12px;line-height:12px;color:#353d46;letter-spacing:0.15px;">1.556</div>
<div class="t " style="right:1132.0px;top:460.0px;font-size:12px;line-height:12px;color:#353d46;letter-spacing:0.15px;">77,96 €</div>
<svg class="a" style="left:976px;top:458px;" width="14" height="14" viewBox="0 0 14 14"><rect x="0.5" y="0.5" width="13" height="13" fill="#fff" stroke="#1e9be0" stroke-width="1"/><path d="M3.2 7 L6 9.8 L10.8 3.8" fill="none" stroke="#1e9be0" stroke-width="2"/></svg>
<div class="t " style="left:170.5px;top:479.0px;font-size:12px;line-height:12px;color:#353d46;letter-spacing:0.35px;">18-05-22</div>
<div class="t " style="left:232.4px;top:479.0px;font-size:12px;line-height:12px;color:#353d46;letter-spacing:-0.2px;">D-D-D</div>
<svg class="a" style="left:558px;top:477px;" width="14" height="14" viewBox="0 0 14 14"><rect x="0.5" y="0.5" width="13" height="13" fill="#fff" stroke="#1e9be0" stroke-width="1"/><path d="M3.2 7 L6 9.8 L10.8 3.8" fill="none" stroke="#1e9be0" stroke-width="2"/></svg>
<svg class="a" style="left:622.5px;top:478.5px;" width="12" height="12" viewBox="0 0 12 12"><circle cx="6" cy="6" r="5.6" fill="#e0503c"/></svg>
<div class="t " style="right:1356.5px;top:479.0px;font-size:12px;line-height:12px;color:#353d46;letter-spacing:0.15px;">1.050</div>
<div class="t " style="right:1273.0px;top:479.0px;font-size:12px;line-height:12px;color:#353d46;letter-spacing:0.15px;">95,60 €</div>
<div class="t " style="right:1208.5px;top:479.0px;font-size:12px;line-height:12px;color:#353d46;letter-spacing:0.15px;">2.234</div>
<div class="t " style="right:1132.0px;top:479.0px;font-size:12px;line-height:12px;color:#353d46;letter-spacing:0.15px;">77,96 €</div>
<svg class="a" style="left:976px;top:477px;" width="14" height="14" viewBox="0 0 14 14"><rect x="0.5" y="0.5" width="13" height="13" fill="#fff" stroke="#1e9be0" stroke-width="1"/><path d="M3.2 7 L6 9.8 L10.8 3.8" fill="none" stroke="#1e9be0" stroke-width="2"/></svg>
<div class="t " style="left:170.5px;top:498.0px;font-size:12px;line-height:12px;color:#353d46;letter-spacing:0.35px;">19-05-22</div>
<div class="t " style="left:232.4px;top:498.0px;font-size:12px;line-height:12px;color:#353d46;letter-spacing:-0.2px;">D-D-D</div>
<svg class="a" style="left:558px;top:496px;" width="14" height="14" viewBox="0 0 14 14"><rect x="0.5" y="0.5" width="13" height="13" fill="#fff" stroke="#1e9be0" stroke-width="1"/><path d="M3.2 7 L6 9.8 L10.8 3.8" fill="none" stroke="#1e9be0" stroke-width="2"/></svg>
<svg class="a" style="left:622.5px;top:497.5px;" width="12" height="12" viewBox="0 0 12 12"><circle cx="6" cy="6" r="5.6" fill="#e0503c"/></svg>
<div class="t " style="right:1356.5px;top:498.0px;font-size:12px;line-height:12px;color:#353d46;letter-spacing:0.15px;">786</div>
<div class="t " style="right:1273.0px;top:498.0px;font-size:12px;line-height:12px;color:#353d46;letter-spacing:0.15px;">72,00 €</div>
<div class="t " style="right:1208.5px;top:498.0px;font-size:12px;line-height:12px;color:#353d46;letter-spacing:0.15px;">1.858</div>
<div class="t " style="right:1132.0px;top:498.0px;font-size:12px;line-height:12px;color:#353d46;letter-spacing:0.15px;">65,78 €</div>
<svg class="a" style="left:976px;top:496px;" width="14" height="14" viewBox="0 0 14 14"><rect x="0.5" y="0.5" width="13" height="13" fill="#fff" stroke="#1e9be0" stroke-width="1"/><path d="M3.2 7 L6 9.8 L10.8 3.8" fill="none" stroke="#1e9be0" stroke-width="2"/></svg>
<div class="t " style="left:170.5px;top:517.0px;font-size:12px;line-height:12px;color:#353d46;letter-spacing:0.35px;">20-05-22</div>
<div class="t " style="left:232.4px;top:517.0px;font-size:12px;line-height:12px;color:#353d46;letter-spacing:-0.2px;">D-D-D</div>
<svg class="a" style="left:558px;top:515px;" width="14" height="14" viewBox="0 0 14 14"><rect x="0.5" y="0.5" width="13" height="13" fill="#fff" stroke="#1e9be0" stroke-width="1"/><path d="M3.2 7 L6 9.8 L10.8 3.8" fill="none" stroke="#1e9be0" stroke-width="2"/></svg>
<svg class="a" style="left:622.5px;top:516.5px;" width="12" height="12" viewBox="0 0 12 12"><circle cx="6" cy="6" r="5.6" fill="#e0503c"/></svg>
<svg class="a" style="left:976px;top:515px;" width="14" height="14" viewBox="0 0 14 14"><rect x="0.5" y="0.5" width="13" height="13" fill="#fff" stroke="#1e9be0" stroke-width="1"/><path d="M3.2 7 L6 9.8 L10.8 3.8" fill="none" stroke="#1e9be0" stroke-width="2"/></svg>
<div class="t " style="left:170.5px;top:536.0px;font-size:12px;line-height:12px;color:#353d46;letter-spacing:0.35px;">21-05-22</div>
<div class="t " style="left:232.4px;top:536.0px;font-size:12px;line-height:12px;color:#353d46;letter-spacing:-0.2px;">D-D-D</div>
<svg class="a" style="left:558px;top:534px;" width="14" height="14" viewBox="0 0 14 14"><rect x="0.5" y="0.5" width="13" height="13" fill="#fff" stroke="#1e9be0" stroke-width="1"/><path d="M3.2 7 L6 9.8 L10.8 3.8" fill="none" stroke="#1e9be0" stroke-width="2"/></svg>
<svg class="a" style="left:622.5px;top:535.5px;" width="12" height="12" viewBox="0 0 12 12"><circle cx="6" cy="6" r="5.6" fill="#e0503c"/></svg>
<svg class="a" style="left:976px;top:534px;" width="14" height="14" viewBox="0 0 14 14"><rect x="0.5" y="0.5" width="13" height="13" fill="#fff" stroke="#1e9be0" stroke-width="1"/><path d="M3.2 7 L6 9.8 L10.8 3.8" fill="none" stroke="#1e9be0" stroke-width="2"/></svg>
<div class="t " style="left:170.5px;top:555.0px;font-size:12px;line-height:12px;color:#353d46;letter-spacing:0.35px;">23-05-22</div>
<div class="t " style="left:232.4px;top:555.0px;font-size:12px;line-height:12px;color:#353d46;letter-spacing:-0.2px;">D-D-D</div>
<svg class="a" style="left:558px;top:553px;" width="14" height="14" viewBox="0 0 14 14"><rect x="0.5" y="0.5" width="13" height="13" fill="#fff" stroke="#1e9be0" stroke-width="1"/><path d="M3.2 7 L6 9.8 L10.8 3.8" fill="none" stroke="#1e9be0" stroke-width="2"/></svg>
<svg class="a" style="left:622.5px;top:554.5px;" width="12" height="12" viewBox="0 0 12 12"><circle cx="6" cy="6" r="5.6" fill="#e0503c"/></svg>
<div class="t " style="right:1356.5px;top:555.0px;font-size:12px;line-height:12px;color:#353d46;letter-spacing:0.15px;">808</div>
<div class="t " style="right:1273.0px;top:555.0px;font-size:12px;line-height:12px;color:#353d46;letter-spacing:0.15px;">73,08 €</div>
<div class="t " style="right:1208.5px;top:555.0px;font-size:12px;line-height:12px;color:#353d46;letter-spacing:0.15px;">1.578</div>
<div class="t " style="right:1132.0px;top:555.0px;font-size:12px;line-height:12px;color:#353d46;letter-spacing:0.15px;">80,09 €</div>
<svg class="a" style="left:976px;top:553px;" width="14" height="14" viewBox="0 0 14 14"><rect x="0.5" y="0.5" width="13" height="13" fill="#fff" stroke="#1e9be0" stroke-width="1"/><path d="M3.2 7 L6 9.8 L10.8 3.8" fill="none" stroke="#1e9be0" stroke-width="2"/></svg>
<div class="t " style="left:170.5px;top:574.0px;font-size:12px;line-height:12px;color:#353d46;letter-spacing:0.35px;">24-05-22</div>
<div class="t " style="left:232.4px;top:574.0px;font-size:12px;line-height:12px;color:#353d46;letter-spacing:-0.2px;">D-D-D</div>
<svg class="a" style="left:558px;top:572px;" width="14" height="14" viewBox="0 0 14 14"><rect x="0.5" y="0.5" width="13" height="13" fill="#fff" stroke="#1e9be0" stroke-width="1"/><path d="M3.2 7 L6 9.8 L10.8 3.8" fill="none" stroke="#1e9be0" stroke-width="2"/></svg>
<svg class="a" style="left:622.5px;top:573.5px;" width="12" height="12" viewBox="0 0 12 12"><circle cx="6" cy="6" r="5.6" fill="#e0503c"/></svg>
<div class="t " style="right:1356.5px;top:574.0px;font-size:12px;line-height:12px;color:#353d46;letter-spacing:0.15px;">808</div>
<div class="t " style="right:1273.0px;top:574.0px;font-size:12px;line-height:12px;color:#353d46;letter-spacing:0.15px;">73,08 €</div>
<div class="t " style="right:1208.5px;top:574.0px;font-size:12px;line-height:12px;color:#353d46;letter-spacing:0.15px;">1.578</div>
<div class="t " style="right:1132.0px;top:574.0px;font-size:12px;line-height:12px;color:#353d46;letter-spacing:0.15px;">80,09 €</div>
<svg class="a" style="left:976px;top:572px;" width="14" height="14" viewBox="0 0 14 14"><rect x="0.5" y="0.5" width="13" height="13" fill="#fff" stroke="#1e9be0" stroke-width="1"/><path d="M3.2 7 L6 9.8 L10.8 3.8" fill="none" stroke="#1e9be0" stroke-width="2"/></svg>
<div class="t " style="left:170.5px;top:593.0px;font-size:12px;line-height:12px;color:#353d46;letter-spacing:0.35px;">25-05-22</div>
<div class="t " style="left:232.4px;top:593.0px;font-size:12px;line-height:12px;color:#353d46;letter-spacing:-0.2px;">D-D-D</div>
<svg class="a" style="left:558px;top:591px;" width="14" height="14" viewBox="0 0 14 14"><rect x="0.5" y="0.5" width="13" height="13" fill="#fff" stroke="#1e9be0" stroke-width="1"/><path d="M3.2 7 L6 9.8 L10.8 3.8" fill="none" stroke="#1e9be0" stroke-width="2"/></svg>
<svg class="a" style="left:622.5px;top:592.5px;" width="12" height="12" viewBox="0 0 12 12"><circle cx="6" cy="6" r="5.6" fill="#e0503c"/></svg>
<div class="t " style="right:1356.5px;top:593.0px;font-size:12px;line-height:12px;color:#353d46;letter-spacing:0.15px;">808</div>
<div class="t " style="right:1273.0px;top:593.0px;font-size:12px;line-height:12px;color:#353d46;letter-spacing:0.15px;">73,08 €</div>
<div class="t " style="right:1208.5px;top:593.0px;font-size:12px;line-height:12px;color:#353d46;letter-spacing:0.15px;">1.578</div>
<div class="t " style="right:1132.0px;top:593.0px;font-size:12px;line-height:12px;color:#353d46;letter-spacing:0.15px;">80,09 €</div>
<svg class="a" style="left:976px;top:591px;" width="14" height="14" viewBox="0 0 14 14"><rect x="0.5" y="0.5" width="13" height="13" fill="#fff" stroke="#1e9be0" stroke-width="1"/><path d="M3.2 7 L6 9.8 L10.8 3.8" fill="none" stroke="#1e9be0" stroke-width="2"/></svg>
<div class="t " style="left:170.5px;top:612.0px;font-size:12px;line-height:12px;color:#353d46;letter-spacing:0.35px;">26-05-22</div>
<div class="t " style="left:232.4px;top:612.0px;font-size:12px;line-height:12px;color:#353d46;letter-spacing:-0.2px;">D-D-D</div>
<svg class="a" style="left:558px;top:610px;" width="14" height="14" viewBox="0 0 14 14"><rect x="0.5" y="0.5" width="13" height="13" fill="#fff" stroke="#1e9be0" stroke-width="1"/><path d="M3.2 7 L6 9.8 L10.8 3.8" fill="none" stroke="#1e9be0" stroke-width="2"/></svg>
<svg class="a" style="left:622.5px;top:611.5px;" width="12" height="12" viewBox="0 0 12 12"><circle cx="6" cy="6" r="5.6" fill="#e0503c"/></svg>
<div class="t " style="right:1356.5px;top:612.0px;font-size:12px;line-height:12px;color:#353d46;letter-spacing:0.15px;">808</div>
<div class="t " style="right:1273.0px;top:612.0px;font-size:12px;line-height:12px;color:#353d46;letter-spacing:0.15px;">73,08 €</div>
<div class="t " style="right:1208.5px;top:612.0px;font-size:12px;line-height:12px;color:#353d46;letter-spacing:0.15px;">1.880</div>
<div class="t " style="right:1132.0px;top:612.0px;font-size:12px;line-height:12px;color:#353d46;letter-spacing:0.15px;">70,51 €</div>
<svg class="a" style="left:976px;top:610px;" width="14" height="14" viewBox="0 0 14 14"><rect x="0.5" y="0.5" width="13" height="13" fill="#fff" stroke="#1e9be0" stroke-width="1"/><path d="M3.2 7 L6 9.8 L10.8 3.8" fill="none" stroke="#1e9be0" stroke-width="2"/></svg>
<svg class="a" style="left:716px;top:635px;" width="18" height="4" viewBox="0 0 18 4"><rect x="0" y="0" width="1" height="1" fill="#9aa"/><rect x="0" y="2" width="1" height="1" fill="#9aa"/><rect x="2" y="0" width="1" height="1" fill="#9aa"/><rect x="2" y="2" width="1" height="1" fill="#9aa"/><rect x="4" y="0" width="1" height="1" fill="#9aa"/><rect x="4" y="2" width="1" height="1" fill="#9aa"/><rect x="6" y="0" width="1" height="1" fill="#9aa"/><rect x="6" y="2" width="1" height="1" fill="#9aa"/><rect x="8" y="0" width="1" height="1" fill="#9aa"/><rect x="8" y="2" width="1" height="1" fill="#9aa"/><rect x="10" y="0" width="1" height="1" fill="#9aa"/><rect x="10" y="2" width="1" height="1" fill="#9aa"/><rect x="12" y="0" width="1" height="1" fill="#9aa"/><rect x="12" y="2" width="1" height="1" fill="#9aa"/><rect x="14" y="0" width="1" height="1" fill="#9aa"/><rect x="14" y="2" width="1" height="1" fill="#9aa"/><rect x="16" y="0" width="1" height="1" fill="#9aa"/><rect x="16" y="2" width="1" height="1" fill="#9aa"/></svg>
<div class="a" style="left:161px;top:645px;width:1px;height:396px;background:#dcdcdc;"></div>
<div class="a" style="left:162px;top:677px;width:1108px;height:19px;background:#c5e1ef;"></div>
<div class="a" style="left:162px;top:695px;width:1108px;height:1px;background-image:linear-gradient(90deg,#cfcfcf 50%,transparent 50%);background-size:2px 1px;"></div>
<div class="a" style="left:162px;top:714px;width:1108px;height:1px;background-image:linear-gradient(90deg,#cfcfcf 50%,transparent 50%);background-size:2px 1px;"></div>
<div class="a" style="left:162px;top:733px;width:1108px;height:1px;background-image:linear-gradient(90deg,#cfcfcf 50%,transparent 50%);background-size:2px 1px;"></div>
<div class="a" style="left:162px;top:752px;width:1108px;height:1px;background-image:linear-gradient(90deg,#cfcfcf 50%,transparent 50%);background-size:2px 1px;"></div>
<div class="a" style="left:162px;top:771px;width:1108px;height:1px;background-image:linear-gradient(90deg,#cfcfcf 50%,transparent 50%);background-size:2px 1px;"></div>
<div class="a" style="left:162px;top:790px;width:1108px;height:1px;background-image:linear-gradient(90deg,#cfcfcf 50%,transparent 50%);background-size:2px 1px;"></div>
<div class="a" style="left:162px;top:809px;width:1108px;height:1px;background-image:linear-gradient(90deg,#cfcfcf 50%,transparent 50%);background-size:2px 1px;"></div>
<div class="a" style="left:162px;top:828px;width:1108px;height:1px;background-image:linear-gradient(90deg,#cfcfcf 50%,transparent 50%);background-size:2px 1px;"></div>
<div class="a" style="left:162px;top:847px;width:1108px;height:1px;background-image:linear-gradient(90deg,#cfcfcf 50%,transparent 50%);background-size:2px 1px;"></div>
<div class="a" style="left:162px;top:866px;width:1108px;height:1px;background-image:linear-gradient(90deg,#cfcfcf 50%,transparent 50%);background-size:2px 1px;"></div>
<div class="a" style="left:162px;top:885px;width:1108px;height:1px;background-image:linear-gradient(90deg,#cfcfcf 50%,transparent 50%);background-size:2px 1px;"></div>
<div class="a" style="left:162px;top:904px;width:1108px;height:1px;background-image:linear-gradient(90deg,#cfcfcf 50%,transparent 50%);background-size:2px 1px;"></div>
<div class="a" style="left:162px;top:923px;width:1108px;height:1px;background-image:linear-gradient(90deg,#cfcfcf 50%,transparent 50%);background-size:2px 1px;"></div>
<div class="a" style="left:162px;top:942px;width:1108px;height:1px;background-image:linear-gradient(90deg,#cfcfcf 50%,transparent 50%);background-size:2px 1px;"></div>
<div class="a" style="left:162px;top:961px;width:1108px;height:1px;background-image:linear-gradient(90deg,#cfcfcf 50%,transparent 50%);background-size:2px 1px;"></div>
<div class="a" style="left:162px;top:980px;width:1108px;height:1px;background-image:linear-gradient(90deg,#cfcfcf 50%,transparent 50%);background-size:2px 1px;"></div>
<div class="a" style="left:162px;top:999px;width:1108px;height:1px;background-image:linear-gradient(90deg,#cfcfcf 50%,transparent 50%);background-size:2px 1px;"></div>
<div class="a" style="left:162px;top:1018px;width:1108px;height:1px;background-image:linear-gradient(90deg,#cfcfcf 50%,transparent 50%);background-size:2px 1px;"></div>
<div class="a" style="left:162px;top:1037px;width:1108px;height:1px;background-image:linear-gradient(90deg,#cfcfcf 50%,transparent 50%);background-size:2px 1px;"></div>
<div class="a" style="left:228px;top:677px;width:1px;height:364px;background:#dcdcdc;"></div>
<div class="a" style="left:649px;top:677px;width:1px;height:364px;background:#dcdcdc;"></div>
<div class="a" style="left:683px;top:677px;width:1px;height:364px;background:#dcdcdc;"></div>
<div class="a" style="left:731px;top:677px;width:1px;height:364px;background:#dcdcdc;"></div>
<div class="a" style="left:865px;top:677px;width:1px;height:364px;background:#dcdcdc;"></div>
<div class="a" style="left:916px;top:677px;width:1px;height:364px;background:#dcdcdc;"></div>
<div class="a" style="left:1033px;top:677px;width:1px;height:364px;background:#dcdcdc;"></div>
<div class="a" style="left:1088px;top:677px;width:1px;height:364px;background:#dcdcdc;"></div>
<div class="a" style="left:1153px;top:677px;width:1px;height:364px;background:#dcdcdc;"></div>
<div class="a" style="left:1218px;top:677px;width:1px;height:364px;background:#dcdcdc;"></div>
<div class="a" style="left:1277px;top:677px;width:2px;height:313px;background:#e2e2e2;"></div>
<div class="a" style="left:1270px;top:1040px;width:17px;height:18px;background:#e6e6e6;"></div>
<div class="a" style="left:164px;top:1048px;width:843px;height:2px;background:#e2e2e2;"></div>
<div class="a" style="left:162px;top:1058px;width:1125px;height:1px;background-image:linear-gradient(90deg,#cfcfcf 50%,transparent 50%);background-size:2px 1px;"></div>
<div class="a" style="left:162px;top:1078px;width:1125px;height:1px;background-image:linear-gradient(90deg,#c8c8c8 50%,transparent 50%);background-size:2px 1px;"></div>
<div class="a" style="left:161px;top:1058px;width:1px;height:21px;background:#dcdcdc;"></div>
<div class="t " style="left:164.5px;top:1063.0px;font-size:12px;line-height:12px;color:#353d46;letter-spacing:0.2px;">Somme</div>
<div class="a" style="left:162px;top:645px;width:1125px;height:32px;background:#4a525b;"></div>
<svg class="a" style="left:163.5px;top:646px;" width="7" height="8" viewBox="0 0 7 8"><path d="M0.8 2.8 L3.5 0.6 L6.2 2.8 M0.8 5.2 L3.5 7.4 L6.2 5.2" fill="none" stroke="#c9cdd2" stroke-width="0.9"/></svg>
<svg class="a" style="left:230.0px;top:646px;" width="7" height="8" viewBox="0 0 7 8"><path d="M0.8 2.8 L3.5 0.6 L6.2 2.8 M0.8 5.2 L3.5 7.4 L6.2 5.2" fill="none" stroke="#c9cdd2" stroke-width="0.9"/></svg>
<svg class="a" style="left:651.0px;top:646px;" width="7" height="8" viewBox="0 0 7 8"><path d="M0.8 2.8 L3.5 0.6 L6.2 2.8 M0.8 5.2 L3.5 7.4 L6.2 5.2" fill="none" stroke="#c9cdd2" stroke-width="0.9"/></svg>
<svg class="a" style="left:684.9px;top:646px;" width="7" height="8" viewBox="0 0 7 8"><path d="M0.8 2.8 L3.5 0.6 L6.2 2.8 M0.8 5.2 L3.5 7.4 L6.2 5.2" fill="none" stroke="#c9cdd2" stroke-width="0.9"/></svg>
<svg class="a" style="left:732.9px;top:646px;" width="7" height="8" viewBox="0 0 7 8"><path d="M0.8 2.8 L3.5 0.6 L6.2 2.8 M0.8 5.2 L3.5 7.4 L6.2 5.2" fill="none" stroke="#c9cdd2" stroke-width="0.9"/></svg>
<svg class="a" style="left:866.8px;top:646px;" width="7" height="8" viewBox="0 0 7 8"><path d="M0.8 2.8 L3.5 0.6 L6.2 2.8 M0.8 5.2 L3.5 7.4 L6.2 5.2" fill="none" stroke="#c9cdd2" stroke-width="0.9"/></svg>
<svg class="a" style="left:917.9px;top:646px;" width="7" height="8" viewBox="0 0 7 8"><path d="M0.8 2.8 L3.5 0.6 L6.2 2.8 M0.8 5.2 L3.5 7.4 L6.2 5.2" fill="none" stroke="#c9cdd2" stroke-width="0.9"/></svg>
<svg class="a" style="left:1035.0px;top:646px;" width="7" height="8" viewBox="0 0 7 8"><path d="M0.8 2.8 L3.5 0.6 L6.2 2.8 M0.8 5.2 L3.5 7.4 L6.2 5.2" fill="none" stroke="#c9cdd2" stroke-width="0.9"/></svg>
<svg class="a" style="left:1090.1px;top:646px;" width="7" height="8" viewBox="0 0 7 8"><path d="M0.8 2.8 L3.5 0.6 L6.2 2.8 M0.8 5.2 L3.5 7.4 L6.2 5.2" fill="none" stroke="#c9cdd2" stroke-width="0.9"/></svg>
<svg class="a" style="left:1155.0px;top:646px;" width="7" height="8" viewBox="0 0 7 8"><path d="M0.8 2.8 L3.5 0.6 L6.2 2.8 M0.8 5.2 L3.5 7.4 L6.2 5.2" fill="none" stroke="#c9cdd2" stroke-width="0.9"/></svg>
<svg class="a" style="left:1219.9px;top:646px;" width="7" height="8" viewBox="0 0 7 8"><path d="M0.8 2.8 L3.5 0.6 L6.2 2.8 M0.8 5.2 L3.5 7.4 L6.2 5.2" fill="none" stroke="#c9cdd2" stroke-width="0.9"/></svg>
<div class="t " style="left:181.5px;top:656.0px;font-size:12px;line-height:12px;color:#fff;">Date</div>
<svg class="a" style="left:218px;top:655.5px;" width="11" height="11" viewBox="0 0 11 11"><circle cx="6.8" cy="4.2" r="3.2" fill="none" stroke="#aeb3b8" stroke-width="1.4"/><path d="M4.6 6.5 L1 10" stroke="#aeb3b8" stroke-width="1.8" stroke-linecap="round"/></svg>
<div class="t " style="left:421.1px;top:656.0px;font-size:12px;line-height:12px;color:#fff;">Projet</div>
<svg class="a" style="left:639px;top:656px;" width="10" height="10" viewBox="0 0 10 10"><path d="M0 0 H10 L6 4.5 V10 H4 V4.5 Z" fill="#a9aeb3"/></svg>
<div class="a" style="left:650px;top:656px;width:24px;height:14px;overflow:hidden;"><div class="t" style="right:0;top:0;font-size:12px;line-height:12px;color:#fff;">Quarter</div></div>
<svg class="a" style="left:674px;top:656px;" width="10" height="10" viewBox="0 0 10 10"><path d="M0 0 H10 L6 4.5 V10 H4 V4.5 Z" fill="#a9aeb3"/></svg>
<div class="a" style="left:684px;top:656px;width:38px;height:14px;overflow:hidden;"><div class="t" style="right:-7px;top:0;font-size:12px;line-height:12px;color:#fff;">Numéro</div></div>
<svg class="a" style="left:721px;top:656px;" width="10" height="10" viewBox="0 0 10 10"><path d="M0 0 H10 L6 4.5 V10 H4 V4.5 Z" fill="#a9aeb3"/></svg>
<div class="t " style="left:770.3px;top:656.0px;font-size:12px;line-height:12px;color:#fff;letter-spacing:0.3px;">Personnel</div>
<svg class="a" style="left:855px;top:656px;" width="10" height="10" viewBox="0 0 10 10"><path d="M0 0 H10 L6 4.5 V10 H4 V4.5 Z" fill="#a9aeb3"/></svg>
<div class="t " style="left:883.7px;top:656.0px;font-size:12px;line-height:12px;color:#fff;">CP</div>
<svg class="a" style="left:906px;top:656px;" width="10" height="10" viewBox="0 0 10 10"><path d="M0 0 H10 L6 4.5 V10 H4 V4.5 Z" fill="#a9aeb3"/></svg>
<div class="t " style="left:957.6px;top:656.0px;font-size:12px;line-height:12px;color:#fff;">Trajet</div>
<svg class="a" style="left:1023px;top:656px;" width="10" height="10" viewBox="0 0 10 10"><path d="M0 0 H10 L6 4.5 V10 H4 V4.5 Z" fill="#a9aeb3"/></svg>
<div class="t " style="left:1052.3px;top:656.0px;font-size:12px;line-height:12px;color:#fff;">Édité</div>
<div class="t " style="left:1102.6px;top:656.0px;font-size:12px;line-height:12px;color:#fff;">Édité RH</div>
<div class="t " style="left:1169.2px;top:656.0px;font-size:12px;line-height:12px;color:#fff;letter-spacing:0.2px;">Barème</div>
<div class="t " style="left:1219.0px;top:656.0px;font-size:12px;line-height:12px;color:#fff;width:51px;overflow:hidden;letter-spacing:0.2px;">Résolutions</div>
<svg class="a" style="left:1275px;top:656px;" width="6" height="10" viewBox="0 0 6 10"><path d="M0.8 0.8 L4.8 5 L0.8 9.2" fill="none" stroke="#b8bcc0" stroke-width="1"/></svg>
<div class="t " style="left:170.5px;top:681.0px;font-size:12px;line-height:12px;color:#353d46;letter-spacing:0.35px;">02-05-22</div>
<div class="t " style="left:232.4px;top:681.0px;font-size:12px;line-height:12px;color:#353d46;letter-spacing:0.39px;">011 - SAV Oostende</div>
<div class="t " style="left:653.6px;top:681.0px;font-size:12px;line-height:12px;color:#353d46;width:29px;overflow:hidden;letter-spacing:0.2px;">DEPARTEMENT</div>
<div class="t " style="left:687.0px;top:681.0px;font-size:12px;line-height:12px;color:#353d46;letter-spacing:0.2px;">19</div>
<div class="t " style="left:735.5px;top:681.0px;font-size:12px;line-height:12px;color:#353d46;width:129px;overflow:hidden;letter-spacing:-0.22px;">AERTS ANTHONY</div>
<div class="t " style="left:869.3px;top:681.0px;font-size:12px;line-height:12px;color:#353d46;letter-spacing:0.2px;">124</div>
<div class="t " style="left:920.0px;top:681.0px;font-size:12px;line-height:12px;color:#353d46;letter-spacing:-0.2px;">D-D-D</div>
<svg class="a" style="left:1179px;top:680px;" width="14" height="14" viewBox="0 0 14 14"><rect x="0.5" y="0.5" width="13" height="13" fill="#fff" stroke="#1e9be0" stroke-width="1"/><path d="M3.2 7 L6 9.8 L10.8 3.8" fill="none" stroke="#1e9be0" stroke-width="2"/></svg>
<svg class="a" style="left:1244.5px;top:680.5px;" width="12" height="12" viewBox="0 0 12 12"><circle cx="6" cy="6" r="5.6" fill="#4caf3e"/><path d="M3.3 6.2 L5.2 8 L8.8 4.3" fill="none" stroke="#fff" stroke-width="1.5"/></svg>
<div class="t " style="left:170.5px;top:700.0px;font-size:12px;line-height:12px;color:#353d46;letter-spacing:0.35px;">02-05-22</div>
<div class="t " style="left:232.4px;top:700.0px;font-size:12px;line-height:12px;color:#353d46;letter-spacing:0.2px;">160609 - THIEU</div>
<div class="t " style="left:653.6px;top:700.0px;font-size:12px;line-height:12px;color:#353d46;width:29px;overflow:hidden;letter-spacing:0.2px;">DEPARTEMENT</div>
<div class="t " style="left:687.0px;top:700.0px;font-size:12px;line-height:12px;color:#353d46;letter-spacing:0.2px;">20</div>
<div class="t " style="left:735.5px;top:700.0px;font-size:12px;line-height:12px;color:#353d46;width:129px;overflow:hidden;letter-spacing:-0.22px;">BAUDART FREDERIC</div>
<div class="t " style="left:869.3px;top:700.0px;font-size:12px;line-height:12px;color:#353d46;letter-spacing:0.2px;">124</div>
<div class="t " style="left:920.0px;top:700.0px;font-size:12px;line-height:12px;color:#353d46;letter-spacing:-0.2px;">D-D-D</div>
<svg class="a" style="left:1179px;top:699px;" width="14" height="14" viewBox="0 0 14 14"><rect x="0.5" y="0.5" width="13" height="13" fill="#fff" stroke="#1e9be0" stroke-width="1"/><path d="M3.2 7 L6 9.8 L10.8 3.8" fill="none" stroke="#1e9be0" stroke-width="2"/></svg>
<svg class="a" style="left:1244.5px;top:699.5px;" width="12" height="12" viewBox="0 0 12 12"><circle cx="6" cy="6" r="5.6" fill="#4caf3e"/><path d="M3.3 6.2 L5.2 8 L8.8 4.3" fill="none" stroke="#fff" stroke-width="1.5"/></svg>
<div class="t " style="left:170.5px;top:719.0px;font-size:12px;line-height:12px;color:#353d46;letter-spacing:0.35px;">02-05-22</div>
<div class="t " style="left:232.4px;top:719.0px;font-size:12px;line-height:12px;color:#353d46;letter-spacing:0.15px;">160221 - L&#x27;OREAL  Echant.</div>
<div class="t " style="left:653.6px;top:719.0px;font-size:12px;line-height:12px;color:#353d46;width:29px;overflow:hidden;letter-spacing:0.2px;">DEPARTEMENT</div>
<div class="t " style="left:687.0px;top:719.0px;font-size:12px;line-height:12px;color:#353d46;letter-spacing:0.2px;">22</div>
<div class="t " style="left:735.5px;top:719.0px;font-size:12px;line-height:12px;color:#353d46;width:129px;overflow:hidden;letter-spacing:-0.22px;">BORDIGNON AMACRO</div>
<div class="t " style="left:869.3px;top:719.0px;font-size:12px;line-height:12px;color:#353d46;letter-spacing:0.2px;">124</div>
<div class="t " style="left:920.0px;top:719.0px;font-size:12px;line-height:12px;color:#353d46;letter-spacing:-0.2px;">D-D-D</div>
<svg class="a" style="left:1179px;top:718px;" width="14" height="14" viewBox="0 0 14 14"><rect x="0.5" y="0.5" width="13" height="13" fill="#fff" stroke="#1e9be0" stroke-width="1"/><path d="M3.2 7 L6 9.8 L10.8 3.8" fill="none" stroke="#1e9be0" stroke-width="2"/></svg>
<svg class="a" style="left:1244.5px;top:718.5px;" width="12" height="12" viewBox="0 0 12 12"><circle cx="6" cy="6" r="5.6" fill="#e0503c"/></svg>
<div class="t " style="left:170.5px;top:738.0px;font-size:12px;line-height:12px;color:#353d46;letter-spacing:0.35px;">02-05-22</div>
<div class="t " style="left:232.4px;top:738.0px;font-size:12px;line-height:12px;color:#353d46;letter-spacing:0.15px;">160221 - L&#x27;OREAL  Echant.</div>
<div class="t " style="left:653.6px;top:738.0px;font-size:12px;line-height:12px;color:#353d46;width:29px;overflow:hidden;letter-spacing:0.2px;">DEPARTEMENT</div>
<div class="t " style="left:687.0px;top:738.0px;font-size:12px;line-height:12px;color:#353d46;letter-spacing:0.2px;">23</div>
<div class="t " style="left:735.5px;top:738.0px;font-size:12px;line-height:12px;color:#353d46;width:129px;overflow:hidden;letter-spacing:-0.22px;">BULCKE GEOFFREY</div>
<div class="t " style="left:869.3px;top:738.0px;font-size:12px;line-height:12px;color:#353d46;letter-spacing:0.2px;">124</div>
<div class="t " style="left:920.0px;top:738.0px;font-size:12px;line-height:12px;color:#353d46;letter-spacing:-0.2px;">D-D-D</div>
<svg class="a" style="left:1179px;top:737px;" width="14" height="14" viewBox="0 0 14 14"><rect x="0.5" y="0.5" width="13" height="13" fill="#fff" stroke="#1e9be0" stroke-width="1"/><path d="M3.2 7 L6 9.8 L10.8 3.8" fill="none" stroke="#1e9be0" stroke-width="2"/></svg>
<svg class="a" style="left:1244.5px;top:737.5px;" width="12" height="12" viewBox="0 0 12 12"><circle cx="6" cy="6" r="5.6" fill="#e0503c"/></svg>
<div class="t " style="left:170.5px;top:757.0px;font-size:12px;line-height:12px;color:#353d46;letter-spacing:0.35px;">02-05-22</div>
<div class="t " style="left:232.4px;top:757.0px;font-size:12px;line-height:12px;color:#353d46;letter-spacing:0.2px;">160609 - THIEU</div>
<div class="t " style="left:653.6px;top:757.0px;font-size:12px;line-height:12px;color:#353d46;width:29px;overflow:hidden;letter-spacing:0.2px;">DEPARTEMENT</div>
<div class="t " style="left:687.0px;top:757.0px;font-size:12px;line-height:12px;color:#353d46;letter-spacing:0.2px;">25</div>
<div class="t " style="left:735.5px;top:757.0px;font-size:12px;line-height:12px;color:#353d46;width:129px;overflow:hidden;letter-spacing:-0.22px;">CHRISTENS SOTTIAUX</div>
<div class="t " style="left:869.3px;top:757.0px;font-size:12px;line-height:12px;color:#353d46;letter-spacing:0.2px;">124</div>
<div class="t " style="left:920.0px;top:757.0px;font-size:12px;line-height:12px;color:#353d46;letter-spacing:-0.2px;">D-D-D</div>
<svg class="a" style="left:1179px;top:756px;" width="14" height="14" viewBox="0 0 14 14"><rect x="0.5" y="0.5" width="13" height="13" fill="#fff" stroke="#1e9be0" stroke-width="1"/><path d="M3.2 7 L6 9.8 L10.8 3.8" fill="none" stroke="#1e9be0" stroke-width="2"/></svg>
<svg class="a" style="left:1244.5px;top:756.5px;" width="12" height="12" viewBox="0 0 12 12"><circle cx="6" cy="6" r="5.6" fill="#4caf3e"/><path d="M3.3 6.2 L5.2 8 L8.8 4.3" fill="none" stroke="#fff" stroke-width="1.5"/></svg>
<div class="t " style="left:170.5px;top:776.0px;font-size:12px;line-height:12px;color:#353d46;letter-spacing:0.35px;">02-05-22</div>
<div class="t " style="left:232.4px;top:776.0px;font-size:12px;line-height:12px;color:#353d46;letter-spacing:0.15px;">160221 - L&#x27;OREAL  Echant.</div>
<div class="t " style="left:653.6px;top:776.0px;font-size:12px;line-height:12px;color:#353d46;width:29px;overflow:hidden;letter-spacing:0.2px;">DEPARTEMENT</div>
<div class="t " style="left:687.0px;top:776.0px;font-size:12px;line-height:12px;color:#353d46;letter-spacing:0.2px;">13</div>
<div class="t " style="left:735.5px;top:776.0px;font-size:12px;line-height:12px;color:#353d46;width:129px;overflow:hidden;letter-spacing:-0.22px;">CHRISTOPHE P-A</div>
<div class="t " style="left:869.3px;top:776.0px;font-size:12px;line-height:12px;color:#353d46;letter-spacing:0.2px;">124</div>
<div class="t " style="left:920.0px;top:776.0px;font-size:12px;line-height:12px;color:#353d46;letter-spacing:-0.2px;">D-D-D</div>
<svg class="a" style="left:1179px;top:775px;" width="14" height="14" viewBox="0 0 14 14"><rect x="0.5" y="0.5" width="13" height="13" fill="#fff" stroke="#1e9be0" stroke-width="1"/><path d="M3.2 7 L6 9.8 L10.8 3.8" fill="none" stroke="#1e9be0" stroke-width="2"/></svg>
<svg class="a" style="left:1244.5px;top:775.5px;" width="12" height="12" viewBox="0 0 12 12"><circle cx="6" cy="6" r="5.6" fill="#e0503c"/></svg>
<div class="t " style="left:170.5px;top:795.0px;font-size:12px;line-height:12px;color:#353d46;letter-spacing:0.35px;">02-05-22</div>
<div class="t " style="left:232.4px;top:795.0px;font-size:12px;line-height:12px;color:#353d46;letter-spacing:0.35px;">030 - Atelier</div>
<div class="t " style="left:653.6px;top:795.0px;font-size:12px;line-height:12px;color:#353d46;width:29px;overflow:hidden;letter-spacing:0.2px;">DEPARTEMENT</div>
<div class="t " style="left:687.0px;top:795.0px;font-size:12px;line-height:12px;color:#353d46;letter-spacing:0.2px;">6</div>
<div class="t " style="left:735.5px;top:795.0px;font-size:12px;line-height:12px;color:#353d46;width:129px;overflow:hidden;letter-spacing:-0.22px;">COEL MARVIN</div>
<div class="t " style="left:869.3px;top:795.0px;font-size:12px;line-height:12px;color:#353d46;letter-spacing:0.2px;">124</div>
<div class="t " style="left:920.0px;top:795.0px;font-size:12px;line-height:12px;color:#353d46;letter-spacing:-0.2px;">D-D-D</div>
<svg class="a" style="left:1179px;top:794px;" width="14" height="14" viewBox="0 0 14 14"><rect x="0.5" y="0.5" width="13" height="13" fill="#fff" stroke="#1e9be0" stroke-width="1"/><path d="M3.2 7 L6 9.8 L10.8 3.8" fill="none" stroke="#1e9be0" stroke-width="2"/></svg>
<svg class="a" style="left:1244.5px;top:794.5px;" width="12" height="12" viewBox="0 0 12 12"><circle cx="6" cy="6" r="5.6" fill="#4caf3e"/><path d="M3.3 6.2 L5.2 8 L8.8 4.3" fill="none" stroke="#fff" stroke-width="1.5"/></svg>
<div class="t " style="left:170.5px;top:814.0px;font-size:12px;line-height:12px;color:#353d46;letter-spacing:0.35px;">02-05-22</div>
<div class="t " style="left:232.4px;top:814.0px;font-size:12px;line-height:12px;color:#353d46;letter-spacing:0.2px;">160605 - SAMART</div>
<div class="t " style="left:653.6px;top:814.0px;font-size:12px;line-height:12px;color:#353d46;width:29px;overflow:hidden;letter-spacing:0.2px;">DEPARTEMENT</div>
<div class="t " style="left:687.0px;top:814.0px;font-size:12px;line-height:12px;color:#353d46;letter-spacing:0.2px;">2</div>
<div class="t " style="left:735.5px;top:814.0px;font-size:12px;line-height:12px;color:#353d46;width:129px;overflow:hidden;letter-spacing:-0.22px;">DE DECKER MIKE</div>
<div class="t " style="left:869.3px;top:814.0px;font-size:12px;line-height:12px;color:#353d46;letter-spacing:0.2px;">124</div>
<div class="t " style="left:920.0px;top:814.0px;font-size:12px;line-height:12px;color:#353d46;letter-spacing:-0.2px;">D-D-D</div>
<svg class="a" style="left:1179px;top:813px;" width="14" height="14" viewBox="0 0 14 14"><rect x="0.5" y="0.5" width="13" height="13" fill="#fff" stroke="#1e9be0" stroke-width="1"/><path d="M3.2 7 L6 9.8 L10.8 3.8" fill="none" stroke="#1e9be0" stroke-width="2"/></svg>
<svg class="a" style="left:1244.5px;top:813.5px;" width="12" height="12" viewBox="0 0 12 12"><circle cx="6" cy="6" r="5.6" fill="#4caf3e"/><path d="M3.3 6.2 L5.2 8 L8.8 4.3" fill="none" stroke="#fff" stroke-width="1.5"/></svg>
<div class="t " style="left:170.5px;top:833.0px;font-size:12px;line-height:12px;color:#353d46;letter-spacing:0.35px;">02-05-22</div>
<div class="t " style="left:232.4px;top:833.0px;font-size:12px;line-height:12px;color:#353d46;letter-spacing:0.2px;">160605 - SAMART</div>
<div class="t " style="left:653.6px;top:833.0px;font-size:12px;line-height:12px;color:#353d46;width:29px;overflow:hidden;letter-spacing:0.2px;">DEPARTEMENT</div>
<div class="t " style="left:735.5px;top:833.0px;font-size:12px;line-height:12px;color:#353d46;width:129px;overflow:hidden;letter-spacing:-0.22px;">DELIZEE CHRISTOPHE</div>
<div class="t " style="left:869.3px;top:833.0px;font-size:12px;line-height:12px;color:#353d46;letter-spacing:0.2px;">124</div>
<div class="t " style="left:920.0px;top:833.0px;font-size:12px;line-height:12px;color:#353d46;letter-spacing:-0.2px;">D-D-D</div>
<svg class="a" style="left:1179px;top:832px;" width="14" height="14" viewBox="0 0 14 14"><rect x="0.5" y="0.5" width="13" height="13" fill="#fff" stroke="#1e9be0" stroke-width="1"/><path d="M3.2 7 L6 9.8 L10.8 3.8" fill="none" stroke="#1e9be0" stroke-width="2"/></svg>
<svg class="a" style="left:1244.5px;top:832.5px;" width="12" height="12" viewBox="0 0 12 12"><circle cx="6" cy="6" r="5.6" fill="#4caf3e"/><path d="M3.3 6.2 L5.2 8 L8.8 4.3" fill="none" stroke="#fff" stroke-width="1.5"/></svg>
<div class="t " style="left:170.5px;top:852.0px;font-size:12px;line-height:12px;color:#353d46;letter-spacing:0.35px;">02-05-22</div>
<div class="t " style="left:232.4px;top:852.0px;font-size:12px;line-height:12px;color:#353d46;letter-spacing:0.39px;">011 - SAV Oostende</div>
<div class="t " style="left:653.6px;top:852.0px;font-size:12px;line-height:12px;color:#353d46;width:29px;overflow:hidden;letter-spacing:0.2px;">DEPARTEMENT</div>
<div class="t " style="left:687.0px;top:852.0px;font-size:12px;line-height:12px;color:#353d46;letter-spacing:0.2px;">7</div>
<div class="t " style="left:735.5px;top:852.0px;font-size:12px;line-height:12px;color:#353d46;width:129px;overflow:hidden;letter-spacing:-0.22px;">DELVAUX STANNY</div>
<div class="t " style="left:869.3px;top:852.0px;font-size:12px;line-height:12px;color:#353d46;letter-spacing:0.2px;">124</div>
<div class="t " style="left:920.0px;top:852.0px;font-size:12px;line-height:12px;color:#353d46;letter-spacing:-0.2px;">D-D-D</div>
<svg class="a" style="left:1179px;top:851px;" width="14" height="14" viewBox="0 0 14 14"><rect x="0.5" y="0.5" width="13" height="13" fill="#fff" stroke="#1e9be0" stroke-width="1"/><path d="M3.2 7 L6 9.8 L10.8 3.8" fill="none" stroke="#1e9be0" stroke-width="2"/></svg>
<svg class="a" style="left:1244.5px;top:851.5px;" width="12" height="12" viewBox="0 0 12 12"><circle cx="6" cy="6" r="5.6" fill="#4caf3e"/><path d="M3.3 6.2 L5.2 8 L8.8 4.3" fill="none" stroke="#fff" stroke-width="1.5"/></svg>
<div class="t " style="left:170.5px;top:871.0px;font-size:12px;line-height:12px;color:#353d46;letter-spacing:0.35px;">02-05-22</div>
<div class="t " style="left:232.4px;top:871.0px;font-size:12px;line-height:12px;color:#353d46;letter-spacing:0.15px;">160221 - L&#x27;OREAL  Echant.</div>
<div class="t " style="left:653.6px;top:871.0px;font-size:12px;line-height:12px;color:#353d46;width:29px;overflow:hidden;letter-spacing:0.2px;">DEPARTEMENT</div>
<div class="t " style="left:735.5px;top:871.0px;font-size:12px;line-height:12px;color:#353d46;width:129px;overflow:hidden;letter-spacing:-0.22px;">DELZIO MAXIME</div>
<div class="t " style="left:869.3px;top:871.0px;font-size:12px;line-height:12px;color:#353d46;letter-spacing:0.2px;">124</div>
<div class="t " style="left:920.0px;top:871.0px;font-size:12px;line-height:12px;color:#353d46;letter-spacing:-0.2px;">D-D-D</div>
<svg class="a" style="left:1179px;top:870px;" width="14" height="14" viewBox="0 0 14 14"><rect x="0.5" y="0.5" width="13" height="13" fill="#fff" stroke="#1e9be0" stroke-width="1"/><path d="M3.2 7 L6 9.8 L10.8 3.8" fill="none" stroke="#1e9be0" stroke-width="2"/></svg>
<svg class="a" style="left:1244.5px;top:870.5px;" width="12" height="12" viewBox="0 0 12 12"><circle cx="6" cy="6" r="5.6" fill="#e0503c"/></svg>
<div class="t " style="left:170.5px;top:890.0px;font-size:12px;line-height:12px;color:#353d46;letter-spacing:0.35px;">02-05-22</div>
<div class="t " style="left:232.4px;top:890.0px;font-size:12px;line-height:12px;color:#353d46;letter-spacing:0.39px;">011 - SAV Oostende</div>
<div class="t " style="left:653.6px;top:890.0px;font-size:12px;line-height:12px;color:#353d46;width:29px;overflow:hidden;letter-spacing:0.2px;">DEPARTEMENT</div>
<div class="t " style="left:687.0px;top:890.0px;font-size:12px;line-height:12px;color:#353d46;letter-spacing:0.2px;">9</div>
<div class="t " style="left:735.5px;top:890.0px;font-size:12px;line-height:12px;color:#353d46;width:129px;overflow:hidden;letter-spacing:-0.22px;">DETIFFE GERALD</div>
<div class="t " style="left:869.3px;top:890.0px;font-size:12px;line-height:12px;color:#353d46;letter-spacing:0.2px;">124</div>
<div class="t " style="left:920.0px;top:890.0px;font-size:12px;line-height:12px;color:#353d46;letter-spacing:-0.2px;">D-D-D</div>
<svg class="a" style="left:1179px;top:889px;" width="14" height="14" viewBox="0 0 14 14"><rect x="0.5" y="0.5" width="13" height="13" fill="#fff" stroke="#1e9be0" stroke-width="1"/><path d="M3.2 7 L6 9.8 L10.8 3.8" fill="none" stroke="#1e9be0" stroke-width="2"/></svg>
<svg class="a" style="left:1244.5px;top:889.5px;" width="12" height="12" viewBox="0 0 12 12"><circle cx="6" cy="6" r="5.6" fill="#4caf3e"/><path d="M3.3 6.2 L5.2 8 L8.8 4.3" fill="none" stroke="#fff" stroke-width="1.5"/></svg>
<div class="t " style="left:170.5px;top:909.0px;font-size:12px;line-height:12px;color:#353d46;letter-spacing:0.35px;">02-05-22</div>
<div class="t " style="left:232.4px;top:909.0px;font-size:12px;line-height:12px;color:#353d46;letter-spacing:0.15px;">160221 - L&#x27;OREAL  Echant.</div>
<div class="t " style="left:653.6px;top:909.0px;font-size:12px;line-height:12px;color:#353d46;width:29px;overflow:hidden;letter-spacing:0.2px;">DEPARTEMENT</div>
<div class="t " style="left:687.0px;top:909.0px;font-size:12px;line-height:12px;color:#353d46;letter-spacing:0.2px;">3</div>
<div class="t " style="left:735.5px;top:909.0px;font-size:12px;line-height:12px;color:#353d46;width:129px;overflow:hidden;letter-spacing:-0.22px;">DONCKERS FREDDY</div>
<div class="t " style="left:869.3px;top:909.0px;font-size:12px;line-height:12px;color:#353d46;letter-spacing:0.2px;">124</div>
<div class="t " style="left:920.0px;top:909.0px;font-size:12px;line-height:12px;color:#353d46;letter-spacing:-0.2px;">D-D-D</div>
<svg class="a" style="left:1179px;top:908px;" width="14" height="14" viewBox="0 0 14 14"><rect x="0.5" y="0.5" width="13" height="13" fill="#fff" stroke="#1e9be0" stroke-width="1"/><path d="M3.2 7 L6 9.8 L10.8 3.8" fill="none" stroke="#1e9be0" stroke-width="2"/></svg>
<svg class="a" style="left:1244.5px;top:908.5px;" width="12" height="12" viewBox="0 0 12 12"><circle cx="6" cy="6" r="5.6" fill="#e0503c"/></svg>
<div class="t " style="left:170.5px;top:928.0px;font-size:12px;line-height:12px;color:#353d46;letter-spacing:0.35px;">02-05-22</div>
<div class="t " style="left:232.4px;top:928.0px;font-size:12px;line-height:12px;color:#353d46;letter-spacing:0.39px;">011 - SAV Oostende</div>
<div class="t " style="left:653.6px;top:928.0px;font-size:12px;line-height:12px;color:#353d46;width:29px;overflow:hidden;letter-spacing:0.2px;">DEPARTEMENT</div>
<div class="t " style="left:687.0px;top:928.0px;font-size:12px;line-height:12px;color:#353d46;letter-spacing:0.2px;">1</div>
<div class="t " style="left:735.5px;top:928.0px;font-size:12px;line-height:12px;color:#353d46;width:129px;overflow:hidden;letter-spacing:-0.22px;">DUPONT DAMIEN</div>
<div class="t " style="left:869.3px;top:928.0px;font-size:12px;line-height:12px;color:#353d46;letter-spacing:0.2px;">124</div>
<div class="t " style="left:920.0px;top:928.0px;font-size:12px;line-height:12px;color:#353d46;letter-spacing:-0.2px;">D-D-D</div>
<svg class="a" style="left:1179px;top:927px;" width="14" height="14" viewBox="0 0 14 14"><rect x="0.5" y="0.5" width="13" height="13" fill="#fff" stroke="#1e9be0" stroke-width="1"/><path d="M3.2 7 L6 9.8 L10.8 3.8" fill="none" stroke="#1e9be0" stroke-width="2"/></svg>
<svg class="a" style="left:1244.5px;top:927.5px;" width="12" height="12" viewBox="0 0 12 12"><circle cx="6" cy="6" r="5.6" fill="#4caf3e"/><path d="M3.3 6.2 L5.2 8 L8.8 4.3" fill="none" stroke="#fff" stroke-width="1.5"/></svg>
<div class="t " style="left:170.5px;top:947.0px;font-size:12px;line-height:12px;color:#353d46;letter-spacing:0.35px;">02-05-22</div>
<div class="t " style="left:232.4px;top:947.0px;font-size:12px;line-height:12px;color:#353d46;letter-spacing:0.15px;">160221 - L&#x27;OREAL  Echant.</div>
<div class="t " style="left:653.6px;top:947.0px;font-size:12px;line-height:12px;color:#353d46;width:29px;overflow:hidden;letter-spacing:0.2px;">DEPARTEMENT</div>
<div class="t " style="left:735.5px;top:947.0px;font-size:12px;line-height:12px;color:#353d46;width:129px;overflow:hidden;letter-spacing:-0.22px;">EDOUARD EDDY</div>
<div class="t " style="left:869.3px;top:947.0px;font-size:12px;line-height:12px;color:#353d46;letter-spacing:0.2px;">124</div>
<div class="t " style="left:920.0px;top:947.0px;font-size:12px;line-height:12px;color:#353d46;letter-spacing:-0.2px;">D-D-D</div>
<svg class="a" style="left:1179px;top:946px;" width="14" height="14" viewBox="0 0 14 14"><rect x="0.5" y="0.5" width="13" height="13" fill="#fff" stroke="#1e9be0" stroke-width="1"/><path d="M3.2 7 L6 9.8 L10.8 3.8" fill="none" stroke="#1e9be0" stroke-width="2"/></svg>
<svg class="a" style="left:1244.5px;top:946.5px;" width="12" height="12" viewBox="0 0 12 12"><circle cx="6" cy="6" r="5.6" fill="#e0503c"/></svg>
<div class="t " style="left:170.5px;top:966.0px;font-size:12px;line-height:12px;color:#353d46;letter-spacing:0.35px;">02-05-22</div>
<div class="t " style="left:232.4px;top:966.0px;font-size:12px;line-height:12px;color:#353d46;letter-spacing:0.15px;">160221 - L&#x27;OREAL  Echant.</div>
<div class="t " style="left:653.6px;top:966.0px;font-size:12px;line-height:12px;color:#353d46;width:29px;overflow:hidden;letter-spacing:0.2px;">DEPARTEMENT</div>
<div class="t " style="left:687.0px;top:966.0px;font-size:12px;line-height:12px;color:#353d46;letter-spacing:0.2px;">30</div>
<div class="t " style="left:735.5px;top:966.0px;font-size:12px;line-height:12px;color:#353d46;width:129px;overflow:hidden;letter-spacing:-0.22px;">EL FILALI NICO</div>
<div class="t " style="left:869.3px;top:966.0px;font-size:12px;line-height:12px;color:#353d46;letter-spacing:0.2px;">124</div>
<div class="t " style="left:920.0px;top:966.0px;font-size:12px;line-height:12px;color:#353d46;letter-spacing:-0.2px;">D-D-D</div>
<svg class="a" style="left:1179px;top:965px;" width="14" height="14" viewBox="0 0 14 14"><rect x="0.5" y="0.5" width="13" height="13" fill="#fff" stroke="#1e9be0" stroke-width="1"/><path d="M3.2 7 L6 9.8 L10.8 3.8" fill="none" stroke="#1e9be0" stroke-width="2"/></svg>
<svg class="a" style="left:1244.5px;top:965.5px;" width="12" height="12" viewBox="0 0 12 12"><circle cx="6" cy="6" r="5.6" fill="#e0503c"/></svg>
<div class="t " style="left:170.5px;top:985.0px;font-size:12px;line-height:12px;color:#353d46;letter-spacing:0.35px;">02-05-22</div>
<div class="t " style="left:232.4px;top:985.0px;font-size:12px;line-height:12px;color:#353d46;letter-spacing:0.15px;">160221 - L&#x27;OREAL  Echant.</div>
<div class="t " style="left:653.6px;top:985.0px;font-size:12px;line-height:12px;color:#353d46;width:29px;overflow:hidden;letter-spacing:0.2px;">DEPARTEMENT</div>
<div class="t " style="left:687.0px;top:985.0px;font-size:12px;line-height:12px;color:#353d46;letter-spacing:0.2px;">4</div>
<div class="t " style="left:735.5px;top:985.0px;font-size:12px;line-height:12px;color:#353d46;width:129px;overflow:hidden;letter-spacing:-0.22px;">EL HAMADANI VALENTIN</div>
<div class="t " style="left:869.3px;top:985.0px;font-size:12px;line-height:12px;color:#353d46;letter-spacing:0.2px;">124</div>
<div class="t " style="left:920.0px;top:985.0px;font-size:12px;line-height:12px;color:#353d46;letter-spacing:-0.2px;">D-D-D</div>
<svg class="a" style="left:1179px;top:984px;" width="14" height="14" viewBox="0 0 14 14"><rect x="0.5" y="0.5" width="13" height="13" fill="#fff" stroke="#1e9be0" stroke-width="1"/><path d="M3.2 7 L6 9.8 L10.8 3.8" fill="none" stroke="#1e9be0" stroke-width="2"/></svg>
<svg class="a" style="left:1244.5px;top:984.5px;" width="12" height="12" viewBox="0 0 12 12"><circle cx="6" cy="6" r="5.6" fill="#e0503c"/></svg>
<div class="t " style="left:170.5px;top:1004.0px;font-size:12px;line-height:12px;color:#353d46;letter-spacing:0.35px;">02-05-22</div>
<div class="t " style="left:232.4px;top:1004.0px;font-size:12px;line-height:12px;color:#353d46;letter-spacing:0.15px;">160221 - L&#x27;OREAL  Echant.</div>
<div class="t " style="left:653.6px;top:1004.0px;font-size:12px;line-height:12px;color:#353d46;width:29px;overflow:hidden;letter-spacing:0.2px;">DEPARTEMENT</div>
<div class="t " style="left:687.0px;top:1004.0px;font-size:12px;line-height:12px;color:#353d46;letter-spacing:0.2px;">5</div>
<div class="t " style="left:735.5px;top:1004.0px;font-size:12px;line-height:12px;color:#353d46;width:129px;overflow:hidden;letter-spacing:-0.22px;">GODART ERIC</div>
<div class="t " style="left:869.3px;top:1004.0px;font-size:12px;line-height:12px;color:#353d46;letter-spacing:0.2px;">124</div>
<div class="t " style="left:920.0px;top:1004.0px;font-size:12px;line-height:12px;color:#353d46;letter-spacing:-0.2px;">D-D-D</div>
<svg class="a" style="left:1179px;top:1003px;" width="14" height="14" viewBox="0 0 14 14"><rect x="0.5" y="0.5" width="13" height="13" fill="#fff" stroke="#1e9be0" stroke-width="1"/><path d="M3.2 7 L6 9.8 L10.8 3.8" fill="none" stroke="#1e9be0" stroke-width="2"/></svg>
<svg class="a" style="left:1244.5px;top:1003.5px;" width="12" height="12" viewBox="0 0 12 12"><circle cx="6" cy="6" r="5.6" fill="#e0503c"/></svg>
<div class="t " style="left:170.5px;top:1023.0px;font-size:12px;line-height:12px;color:#353d46;letter-spacing:0.35px;">02-05-22</div>
<div class="t " style="left:232.4px;top:1023.0px;font-size:12px;line-height:12px;color:#353d46;letter-spacing:0.2px;">160609 - THIEU</div>
<div class="t " style="left:653.6px;top:1023.0px;font-size:12px;line-height:12px;color:#353d46;width:29px;overflow:hidden;letter-spacing:0.2px;">DEPARTEMENT</div>
<div class="t " style="left:687.0px;top:1023.0px;font-size:12px;line-height:12px;color:#353d46;letter-spacing:0.2px;">35</div>
<div class="t " style="left:735.5px;top:1023.0px;font-size:12px;line-height:12px;color:#353d46;width:129px;overflow:hidden;letter-spacing:-0.22px;">HIMSCHOOT MICHAEL</div>
<div class="t " style="left:869.3px;top:1023.0px;font-size:12px;line-height:12px;color:#353d46;letter-spacing:0.2px;">124</div>
<div class="t " style="left:920.0px;top:1023.0px;font-size:12px;line-height:12px;color:#353d46;letter-spacing:-0.2px;">D-D-D</div>
<svg class="a" style="left:1179px;top:1022px;" width="14" height="14" viewBox="0 0 14 14"><rect x="0.5" y="0.5" width="13" height="13" fill="#fff" stroke="#1e9be0" stroke-width="1"/><path d="M3.2 7 L6 9.8 L10.8 3.8" fill="none" stroke="#1e9be0" stroke-width="2"/></svg>
<svg class="a" style="left:1244.5px;top:1022.5px;" width="12" height="12" viewBox="0 0 12 12"><circle cx="6" cy="6" r="5.6" fill="#4caf3e"/><path d="M3.3 6.2 L5.2 8 L8.8 4.3" fill="none" stroke="#fff" stroke-width="1.5"/></svg>
<div class="a" style="left:1287px;top:177px;width:1px;height:910px;background:#e4e4e4;"></div>
<div class="a" style="left:1294px;top:177px;width:574px;height:78px;background:#b7caf0;"></div>
<div class="t " style="left:1303.3px;top:185.0px;font-size:12px;line-height:12px;color:#3a3f46;font-weight:bold;letter-spacing:1.0px;">Trajet : D-D-D</div>
<div class="t " style="left:1303.3px;top:210.0px;font-size:12px;line-height:12px;color:#353d46;letter-spacing:0.35px;">Prime de déplacement</div>
<div class="t " style="left:1580.0px;top:210.0px;font-size:12px;line-height:12px;color:#353d46;letter-spacing:0.35px;">Prime de mobilité</div>
<div class="a" style="left:1294px;top:261px;width:574px;height:824px;border:1px solid #efefef;border-right:none;box-sizing:border-box;"></div>
<div class="t " style="left:1304.0px;top:271.0px;font-size:12px;line-height:12px;color:#353d46;">1</div>
<div class="t " style="left:1303.3px;top:295.0px;font-size:12px;line-height:12px;color:#353d46;letter-spacing:0.3px;">Domicile</div>
<div class="t " style="left:1303.3px;top:321.0px;font-size:12px;line-height:12px;color:#353d46;letter-spacing:0.36px;">Rue du Vertbois 11, 4000 Liège, Belgium</div>
<svg class="a" style="left:1560px;top:300px;" width="50" height="40" viewBox="0 0 50 40"><path d="M9.2 17.6 H33.7 L28.1 11.6 L32.5 6.9 L46.9 21.4 L32.5 36 L28.1 31.4 L33.7 25.3 H9.2 Z" fill="#0a78d8"/></svg>
<div class="t " style="left:1615.0px;top:295.0px;font-size:12px;line-height:12px;color:#353d46;letter-spacing:0.3px;">Entreprise</div>
<div class="t " style="left:1615.0px;top:321.0px;font-size:12px;line-height:12px;color:#353d46;letter-spacing:0.36px;">Rue de l&#x27;Adoption, 5660 Couvin,</div>
<div class="t " style="left:1615.0px;top:337.0px;font-size:12px;line-height:12px;color:#353d46;letter-spacing:0.36px;">Belgium</div>
<div class="t " style="left:1303.3px;top:387.0px;font-size:12px;line-height:12px;color:#353d46;letter-spacing:0.3px;">Moyen</div>
<div class="t " style="left:1373.2px;top:387.0px;font-size:12px;line-height:12px;color:#353d46;letter-spacing:0.3px;">Privé</div>
<div class="a" style="left:1369px;top:402px;width:211px;height:1px;background:#d6d6d6;"></div>
<svg class="a" style="left:1569px;top:389px;" width="8" height="5" viewBox="0 0 8 5"><path d="M0 0 H7.5 L3.75 4.2 Z" fill="#3c4249"/></svg>
<div class="t " style="left:1303.3px;top:417.0px;font-size:12px;line-height:12px;color:#353d46;letter-spacing:0.3px;">Mobilité</div>
<div class="t " style="left:1373.2px;top:417.0px;font-size:12px;line-height:12px;color:#353d46;letter-spacing:0.3px;">Chauffeur seul</div>
<div class="a" style="left:1369px;top:432px;width:211px;height:1px;background:#d6d6d6;"></div>
<svg class="a" style="left:1569px;top:419px;" width="8" height="5" viewBox="0 0 8 5"><path d="M0 0 H7.5 L3.75 4.2 Z" fill="#3c4249"/></svg>
<div class="a" style="left:1753px;top:437px;width:96px;height:20px;background:#b7caf0;"></div>
<div class="t " style="left:1772.0px;top:443.0px;font-size:12px;line-height:12px;color:#353d46;letter-spacing:0.5px;">132</div>
<div class="t " style="left:1809.0px;top:443.0px;font-size:12px;line-height:12px;color:#353d46;letter-spacing:0.5px;">01:32</div>
<div class="t " style="left:1304.0px;top:472.0px;font-size:12px;line-height:12px;color:#353d46;">2</div>
<div class="t " style="left:1303.3px;top:496.0px;font-size:12px;line-height:12px;color:#353d46;letter-spacing:0.3px;">Entreprise</div>
<div class="t " style="left:1303.3px;top:522.0px;font-size:12px;line-height:12px;color:#353d46;letter-spacing:0.36px;">Rue de l&#x27;Adoption, 5660 Couvin, Belgium</div>
<svg class="a" style="left:1560px;top:501px;" width="50" height="40" viewBox="0 0 50 40"><path d="M9.2 17.6 H33.7 L28.1 11.6 L32.5 6.9 L46.9 21.4 L32.5 36 L28.1 31.4 L33.7 25.3 H9.2 Z" fill="#0a78d8"/></svg>
<div class="t " style="left:1615.0px;top:496.0px;font-size:12px;line-height:12px;color:#353d46;letter-spacing:0.3px;">Chantier</div>
<div class="t " style="left:1303.3px;top:562.0px;font-size:12px;line-height:12px;color:#353d46;letter-spacing:0.3px;">160221 - L&#x27;OREAL  Echant.</div>
<div class="t " style="left:1303.3px;top:588.0px;font-size:12px;line-height:12px;color:#353d46;letter-spacing:0.3px;">Moyen</div>
<div class="t " style="left:1373.2px;top:588.0px;font-size:12px;line-height:12px;color:#353d46;letter-spacing:0.3px;">Professionnel</div>
<div class="a" style="left:1369px;top:603px;width:211px;height:1px;background:#d6d6d6;"></div>
<svg class="a" style="left:1569px;top:590px;" width="8" height="5" viewBox="0 0 8 5"><path d="M0 0 H7.5 L3.75 4.2 Z" fill="#3c4249"/></svg>
<div class="t " style="left:1303.3px;top:618.0px;font-size:12px;line-height:12px;color:#353d46;letter-spacing:0.3px;">Mobilité</div>
<div class="t " style="left:1373.2px;top:618.0px;font-size:12px;line-height:12px;color:#353d46;letter-spacing:0.3px;">Passager</div>
<div class="a" style="left:1369px;top:633px;width:211px;height:1px;background:#d6d6d6;"></div>
<svg class="a" style="left:1569px;top:620px;" width="8" height="5" viewBox="0 0 8 5"><path d="M0 0 H7.5 L3.75 4.2 Z" fill="#3c4249"/></svg>
<div class="a" style="left:1753px;top:638px;width:96px;height:20px;background:#b7caf0;"></div>
<div class="t " style="left:1304.0px;top:673.0px;font-size:12px;line-height:12px;color:#353d46;">3</div>
<div class="t " style="left:1303.3px;top:697.0px;font-size:12px;line-height:12px;color:#353d46;letter-spacing:0.3px;">Chantier</div>
<svg class="a" style="left:1560px;top:702px;" width="50" height="40" viewBox="0 0 50 40"><path d="M9.2 17.6 H33.7 L28.1 11.6 L32.5 6.9 L46.9 21.4 L32.5 36 L28.1 31.4 L33.7 25.3 H9.2 Z" fill="#0a78d8"/></svg>
<div class="t " style="left:1615.0px;top:697.0px;font-size:12px;line-height:12px;color:#353d46;letter-spacing:0.3px;">Entreprise</div>
<div class="t " style="left:1615.0px;top:723.0px;font-size:12px;line-height:12px;color:#353d46;letter-spacing:0.36px;">Rue de l&#x27;Adoption, 5660 Couvin,</div>
<div class="t " style="left:1615.0px;top:739.0px;font-size:12px;line-height:12px;color:#353d46;letter-spacing:0.36px;">Belgium</div>
<div class="t " style="left:1303.3px;top:763.0px;font-size:12px;line-height:12px;color:#353d46;letter-spacing:0.3px;">160221 - L&#x27;OREAL  Echant.</div>
<div class="t " style="left:1303.3px;top:789.0px;font-size:12px;line-height:12px;color:#353d46;letter-spacing:0.3px;">Moyen</div>
<div class="t " style="left:1373.2px;top:789.0px;font-size:12px;line-height:12px;color:#353d46;letter-spacing:0.3px;">Professionnel</div>
<div class="a" style="left:1369px;top:804px;width:211px;height:1px;background:#d6d6d6;"></div>
<svg class="a" style="left:1569px;top:791px;" width="8" height="5" viewBox="0 0 8 5"><path d="M0 0 H7.5 L3.75 4.2 Z" fill="#3c4249"/></svg>
<div class="t " style="left:1303.3px;top:819.0px;font-size:12px;line-height:12px;color:#353d46;letter-spacing:0.3px;">Mobilité</div>
<div class="t " style="left:1373.2px;top:819.0px;font-size:12px;line-height:12px;color:#353d46;letter-spacing:0.3px;">Passager</div>
<div class="a" style="left:1369px;top:834px;width:211px;height:1px;background:#d6d6d6;"></div>
<svg class="a" style="left:1569px;top:821px;" width="8" height="5" viewBox="0 0 8 5"><path d="M0 0 H7.5 L3.75 4.2 Z" fill="#3c4249"/></svg>
<div class="a" style="left:1753px;top:839px;width:96px;height:20px;background:#b7caf0;"></div>
<div class="t " style="left:1304.0px;top:874.0px;font-size:12px;line-height:12px;color:#353d46;">4</div>
<div class="t " style="left:1303.3px;top:898.0px;font-size:12px;line-height:12px;color:#353d46;letter-spacing:0.3px;">Entreprise</div>
<div class="t " style="left:1303.3px;top:924.0px;font-size:12px;line-height:12px;color:#353d46;letter-spacing:0.36px;">Rue de l&#x27;Adoption, 5660 Couvin, Belgium</div>
<svg class="a" style="left:1560px;top:903px;" width="50" height="40" viewBox="0 0 50 40"><path d="M9.2 17.6 H33.7 L28.1 11.6 L32.5 6.9 L46.9 21.4 L32.5 36 L28.1 31.4 L33.7 25.3 H9.2 Z" fill="#0a78d8"/></svg>
<div class="t " style="left:1615.0px;top:898.0px;font-size:12px;line-height:12px;color:#353d46;letter-spacing:0.3px;">Domicile</div>
<div class="t " style="left:1615.0px;top:924.0px;font-size:12px;line-height:12px;color:#353d46;letter-spacing:0.36px;">Rue du Vertbois 11, 4000 Liège,</div>
<div class="t " style="left:1615.0px;top:940.0px;font-size:12px;line-height:12px;color:#353d46;letter-spacing:0.36px;">Belgium</div>
<div class="t " style="left:1303.3px;top:990.0px;font-size:12px;line-height:12px;color:#353d46;letter-spacing:0.3px;">Moyen</div>
<div class="t " style="left:1373.2px;top:990.0px;font-size:12px;line-height:12px;color:#353d46;letter-spacing:0.3px;">Privé</div>
<div class="a" style="left:1369px;top:1005px;width:211px;height:1px;background:#d6d6d6;"></div>
<svg class="a" style="left:1569px;top:992px;" width="8" height="5" viewBox="0 0 8 5"><path d="M0 0 H7.5 L3.75 4.2 Z" fill="#3c4249"/></svg>
<div class="t " style="left:1303.3px;top:1020.0px;font-size:12px;line-height:12px;color:#353d46;letter-spacing:0.3px;">Mobilité</div>
<div class="t " style="left:1373.2px;top:1020.0px;font-size:12px;line-height:12px;color:#353d46;letter-spacing:0.3px;">Chauffeur seul</div>
<div class="a" style="left:1369px;top:1035px;width:211px;height:1px;background:#d6d6d6;"></div>
<svg class="a" style="left:1569px;top:1022px;" width="8" height="5" viewBox="0 0 8 5"><path d="M0 0 H7.5 L3.75 4.2 Z" fill="#3c4249"/></svg>
<div class="a" style="left:1753px;top:1040px;width:96px;height:20px;background:#b7caf0;"></div>
<div class="t " style="left:1772.0px;top:1046.0px;font-size:12px;line-height:12px;color:#353d46;letter-spacing:0.5px;">132</div>
<div class="t " style="left:1809.0px;top:1046.0px;font-size:12px;line-height:12px;color:#353d46;letter-spacing:0.5px;">01:32</div>
<div class="t " style="left:1880.5px;top:185.0px;font-size:12px;line-height:12px;color:#333;letter-spacing:0.2px;">Trajet</div>
<svg class="a" style="left:1886px;top:213px;" width="22" height="27" viewBox="0 0 22 27"><path d="M11 24.5 L3.8 15.5 Q1.2 12.2 1.2 9.2 A9.8 9.8 0 0 1 20.8 9.2 Q20.8 12.2 18.2 15.5 Z" fill="none" stroke="#a5a5a5" stroke-width="2.2" stroke-linejoin="round"/><path d="M6.5 9.5 L10 13 L16 6.5" fill="none" stroke="#a5a5a5" stroke-width="2.2"/></svg>
<div class="t " style="left:1773.5px;width:400px;text-align:center;top:221.0px;font-size:12.5px;line-height:12.5px;color:#a0a0a0;letter-spacing:0.3px;">Trajet base</div>
<svg class="a" style="left:1886px;top:259px;" width="22" height="27" viewBox="0 0 22 27"><path d="M11 24.5 L3.8 15.5 Q1.2 12.2 1.2 9.2 A9.8 9.8 0 0 1 20.8 9.2 Q20.8 12.2 18.2 15.5 Z" fill="none" stroke="#a5a5a5" stroke-width="2.2" stroke-linejoin="round"/><path d="M6.5 9.5 L10 13 L16 6.5" fill="none" stroke="#a5a5a5" stroke-width="2.2"/></svg>
<div class="t " style="left:1773.5px;width:400px;text-align:center;top:267.0px;font-size:12.5px;line-height:12.5px;color:#a0a0a0;letter-spacing:0.2px;">Trajet mobile</div>
<svg class="a" style="left:1886px;top:304px;" width="22" height="28" viewBox="0 0 22 28"><path d="M1.5 1.5 H20.5 V19 H14 L11 26 L8 19 H1.5 Z" fill="none" stroke="#a5a5a5" stroke-width="2.2" stroke-linejoin="round"/><path d="M6.5 10 L9.5 13 L15.5 7" fill="none" stroke="#a5a5a5" stroke-width="2.2"/></svg>
<div class="t " style="left:1773.5px;width:400px;text-align:center;top:313.0px;font-size:12.5px;line-height:12.5px;color:#a0a0a0;letter-spacing:0.23px;">Changer de trajet</div>
<svg class="a" style="left:1885px;top:349px;" width="25" height="30" viewBox="0 0 25 30"><path d="M7 1.5 H17 L23 7.5 V23.5 H7 Z" fill="none" stroke="#a5a5a5" stroke-width="2.4" stroke-linejoin="round"/><path d="M17 1.5 V7.5 H23" fill="#a5a5a5" stroke="#a5a5a5" stroke-width="1.5"/><path d="M1.5 6 V28.5 H18" fill="none" stroke="#a5a5a5" stroke-width="2.4"/></svg>
<div class="t " style="left:1773.5px;width:400px;text-align:center;top:359.0px;font-size:12.5px;line-height:12.5px;color:#a0a0a0;letter-spacing:0.2px;">Copier</div>
<svg class="a" style="left:1881px;top:394px;" width="33" height="33" viewBox="0 0 33 33"><path d="M4 4 H10 M20 4 H25 V11 M12 24 H2 V4" fill="none" stroke="#a5a5a5" stroke-width="2.4"/><rect x="10" y="1.2" width="10" height="5" fill="none" stroke="#a5a5a5" stroke-width="2.2"/><rect x="16.5" y="13.5" width="14.5" height="17.5" fill="none" stroke="#a5a5a5" stroke-width="2.4"/><path d="M20 19 H27.5 M20 23 H27.5 M20 27 H27.5" stroke="#a5a5a5" stroke-width="1.8"/></svg>
<div class="t " style="left:1773.5px;width:400px;text-align:center;top:405.0px;font-size:12.5px;line-height:12.5px;color:#a0a0a0;letter-spacing:0.2px;">Coller</div>
<svg class="a" style="left:1883px;top:445px;" width="28" height="23" viewBox="0 0 28 23"><path d="M14 21.5 L10 14.5 A4.6 4.6 0 1 1 18 14.5 Z" fill="none" stroke="#a5a5a5" stroke-width="2.2" stroke-linejoin="round"/><path d="M6 17 Q1 12 2.5 6 Q4 2 8 2.5 M22 17 Q27 12 25.5 6 Q24 2 20 2.5" fill="none" stroke="#a5a5a5" stroke-width="2.2"/></svg>
<div class="t " style="left:1774.0px;width:400px;text-align:center;top:451.0px;font-size:12.5px;line-height:12.5px;color:#a0a0a0;letter-spacing:0.1px;">Lieu de ramassage</div>
<div class="t " style="left:1880.5px;top:485.0px;font-size:12px;line-height:12px;color:#333;letter-spacing:0.2px;">Raccourcis</div>
<svg class="a" style="left:1881px;top:510px;" width="33" height="34" viewBox="0 0 33 34"><path d="M3.5 12 L16 2 L28.5 12" fill="none" stroke="#1479d2" stroke-width="3.4" stroke-linejoin="miter"/><path d="M11.5 14 V21 H20.5 V14" fill="none" stroke="#1479d2" stroke-width="3"/><path d="M7 18 L2 30.5 Q1.8 32 3.5 32 H28.5 Q30.2 32 30 30.5 L25 18" fill="none" stroke="#1479d2" stroke-width="3" stroke-linejoin="round"/></svg>
<div class="t " style="left:1921.3px;top:522.0px;font-size:12.5px;line-height:12.5px;color:#1479d2;letter-spacing:0.17px;">Adresses projets</div>
<svg class="a" style="left:1881px;top:556px;" width="33" height="34" viewBox="0 0 33 34"><path d="M12 26 H2 V6 H27 V13" fill="none" stroke="#1479d2" stroke-width="3"/><path d="M2 6 H27 V11 H2 Z" fill="#1479d2"/><path d="M8 1 V7 M22 1 V7" stroke="#1479d2" stroke-width="2.6"/><path d="M15.5 31 L17 25 L27 15 L31 19 L21 29 Z" fill="none" stroke="#1479d2" stroke-width="2.8" stroke-linejoin="round"/></svg>
<div class="t " style="left:1920.3px;top:568.0px;font-size:12.5px;line-height:12.5px;color:#1479d2;letter-spacing:0.1px;">Adresses personnels</div>
<svg class="a" style="left:1883px;top:605px;" width="29" height="29" viewBox="0 0 29 29"><circle cx="14" cy="14" r="12" fill="none" stroke="#1479d2" stroke-width="3.2"/><path d="M3 12.5 Q14 9.5 25 12.5" fill="none" stroke="#1479d2" stroke-width="3"/><path d="M9.5 14 V25 M18.5 14 V25" stroke="#1479d2" stroke-width="2.6"/><circle cx="14" cy="14.5" r="2" fill="#1479d2"/></svg>
<div class="t " style="left:1923.6px;top:614.0px;font-size:12.5px;line-height:12.5px;color:#1479d2;letter-spacing:0.07px;">Chauffeurs</div>
<svg class="a" style="left:1950px;top:1051px;" width="25" height="19" viewBox="0 0 25 19"><path d="M1.5 9.5 L8 16 L23.5 1.5" fill="none" stroke="#b4b4b4" stroke-width="3"/></svg>
<div class="t " style="left:2001.4px;top:1055.0px;font-size:12px;line-height:12px;color:#9a9a9a;letter-spacing:0.25px;">Sauver</div>
<svg class="a" style="left:0;top:0" width="2076" height="1098" viewBox="0 0 2076 1098"><rect x="160.5" y="81.5" width="665.5" height="77.5" fill="none" stroke="#0000ff" stroke-width="2.2" stroke-dasharray="6 3"/><rect x="864.5" y="89.5" width="657.5" height="75.5" fill="none" stroke="#0000ff" stroke-width="2.2" stroke-dasharray="6 3"/><rect x="156.5" y="178" width="869.5" height="463" fill="none" stroke="#0000ff" stroke-width="2.2" stroke-dasharray="6 3"/><rect x="154.5" y="647" width="1133.0" height="404" fill="none" stroke="#0000ff" stroke-width="2.2" stroke-dasharray="6 3"/><rect x="1280.5" y="179" width="588.0" height="899.5" fill="none" stroke="#0000ff" stroke-width="2.2" stroke-dasharray="6 3"/><rect x="1876" y="177" width="182" height="474" fill="none" stroke="#0000ff" stroke-width="2.2" stroke-dasharray="6 3"/><line x1="155" y1="68" x2="161" y2="80" stroke="#1a2af0" stroke-width="1.3"/><line x1="1522" y1="126" x2="1739" y2="104" stroke="#1a2af0" stroke-width="1.3"/><line x1="69.5" y1="282" x2="157" y2="178" stroke="#1a2af0" stroke-width="1.3"/><line x1="75" y1="672.3" x2="154.5" y2="647.8" stroke="#1a2af0" stroke-width="1.3"/><line x1="1891.4" y1="808" x2="1987.7" y2="843.6" stroke="#1a2af0" stroke-width="1.3"/><line x1="1973.5" y1="654.2" x2="1981.8" y2="693.3" stroke="#1a2af0" stroke-width="1.3"/></svg>
<div class="a" style="left:107px;top:7px;width:68px;height:62px;border-radius:9px;background:#0589fe;box-shadow:3px 3px 4px rgba(40,40,40,0.55);"></div>
<svg class="a" style="left:107px;top:7px;" width="68" height="62" viewBox="0 0 68 62"><path d="M32.4 20 H38.2 V43.1 H32.7 V28.6 Q30 30.6 26.9 31.4 V26.4 Q30.5 24.8 32.4 20 Z" fill="#fff"/></svg>
<div class="a" style="left:1739px;top:69px;width:68px;height:62px;border-radius:9px;background:#0589fe;box-shadow:3px 3px 4px rgba(40,40,40,0.55);"></div>
<div class="a" style="left:1739px;top:69px;width:68px;height:62px;text-align:center;font-weight:bold;font-size:34px;line-height:62px;color:#fff;transform:scaleX(0.88);">2</div>
<div class="a" style="left:9px;top:281px;width:68px;height:62px;border-radius:9px;background:#0589fe;box-shadow:3px 3px 4px rgba(40,40,40,0.55);"></div>
<div class="a" style="left:9px;top:281px;width:68px;height:62px;text-align:center;font-weight:bold;font-size:34px;line-height:62px;color:#fff;transform:scaleX(0.88);">3</div>
<div class="a" style="left:7px;top:651px;width:68px;height:62px;border-radius:9px;background:#0589fe;box-shadow:3px 3px 4px rgba(40,40,40,0.55);"></div>
<div class="a" style="left:7px;top:651px;width:68px;height:62px;text-align:center;font-weight:bold;font-size:34px;line-height:62px;color:#fff;transform:scaleX(0.88);">4</div>
<div class="a" style="left:1987px;top:825px;width:68px;height:62px;border-radius:9px;background:#0589fe;box-shadow:3px 3px 4px rgba(40,40,40,0.55);"></div>
<div class="a" style="left:1987px;top:825px;width:68px;height:62px;text-align:center;font-weight:bold;font-size:34px;line-height:62px;color:#fff;transform:scaleX(0.88);">5</div>
<div class="a" style="left:1953px;top:693px;width:68px;height:62px;border-radius:9px;background:#0589fe;box-shadow:3px 3px 4px rgba(40,40,40,0.55);"></div>
<div class="a" style="left:1953px;top:693px;width:68px;height:62px;text-align:center;font-weight:bold;font-size:34px;line-height:62px;color:#fff;transform:scaleX(0.88);">6</div>
</body></html>
